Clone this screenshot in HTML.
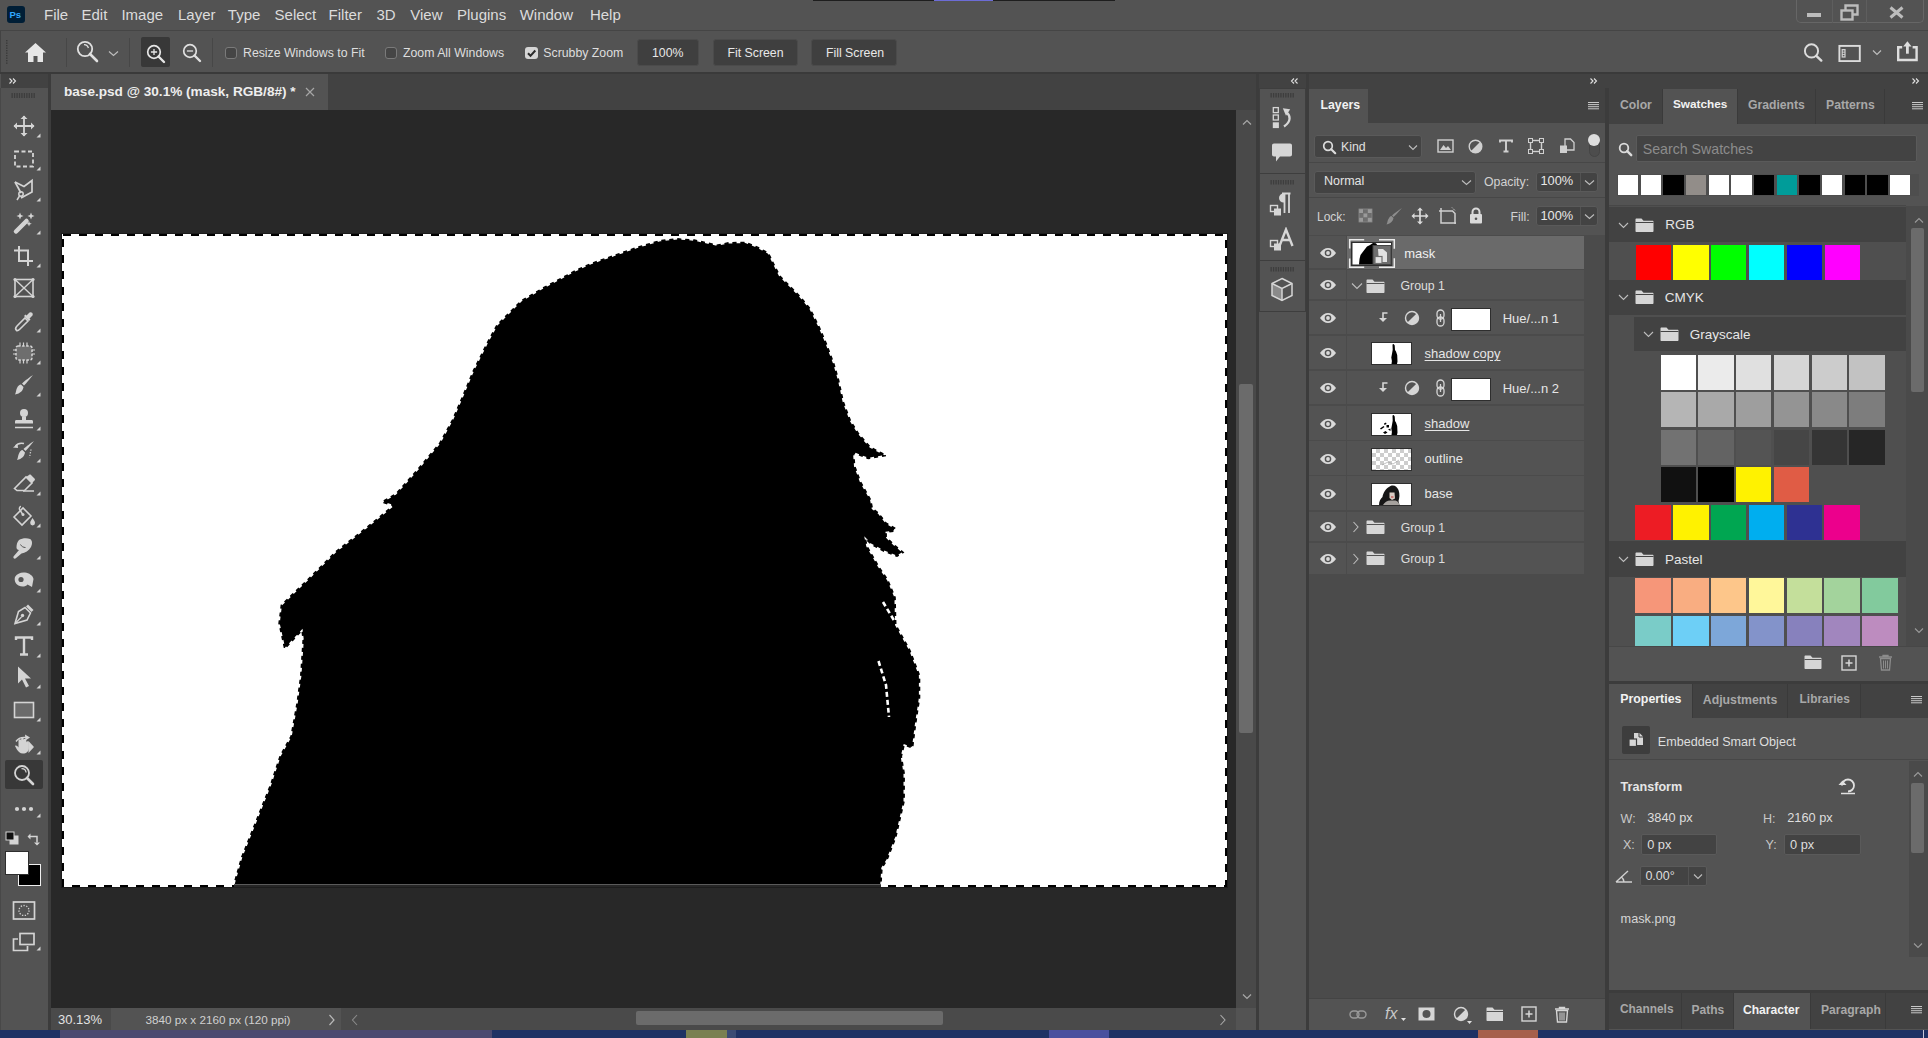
<!DOCTYPE html>
<html><head><meta charset="utf-8"><title>Photoshop</title>
<style>
html,body{margin:0;padding:0;}
body{width:1928px;height:1038px;overflow:hidden;position:relative;background:#535353;font-family:"Liberation Sans",sans-serif;}
body>div,body>svg{position:absolute;}
.t{white-space:pre;}
</style></head><body>
<div style="left:0px;top:0px;width:1928px;height:30px;background:#535353;"></div>
<div style="left:813px;top:0px;width:302px;height:1px;background:#1e1e1e;"></div>
<div style="left:934px;top:0px;width:59px;height:1px;background:#6c6cd6;"></div>
<div style="left:7px;top:6px;width:18px;height:17px;background:#001e36;border-radius:3px;"></div>
<div class="t" style="left:9.5px;top:10.43px;font-size:9.5px;line-height:9.5px;color:#31a8ff;font-weight:700;">Ps</div>
<div class="t" style="left:44px;top:7.25px;font-size:15px;line-height:15px;color:#dcdcdc;font-weight:400;">File</div>
<div class="t" style="left:81.5px;top:7.25px;font-size:15px;line-height:15px;color:#dcdcdc;font-weight:400;">Edit</div>
<div class="t" style="left:121.4px;top:7.25px;font-size:15px;line-height:15px;color:#dcdcdc;font-weight:400;">Image</div>
<div class="t" style="left:178px;top:7.25px;font-size:15px;line-height:15px;color:#dcdcdc;font-weight:400;">Layer</div>
<div class="t" style="left:227.8px;top:7.25px;font-size:15px;line-height:15px;color:#dcdcdc;font-weight:400;">Type</div>
<div class="t" style="left:274.6px;top:7.25px;font-size:15px;line-height:15px;color:#dcdcdc;font-weight:400;">Select</div>
<div class="t" style="left:328.6px;top:7.25px;font-size:15px;line-height:15px;color:#dcdcdc;font-weight:400;">Filter</div>
<div class="t" style="left:376.4px;top:7.25px;font-size:15px;line-height:15px;color:#dcdcdc;font-weight:400;">3D</div>
<div class="t" style="left:410.3px;top:7.25px;font-size:15px;line-height:15px;color:#dcdcdc;font-weight:400;">View</div>
<div class="t" style="left:457px;top:7.25px;font-size:15px;line-height:15px;color:#dcdcdc;font-weight:400;">Plugins</div>
<div class="t" style="left:519.7px;top:7.25px;font-size:15px;line-height:15px;color:#dcdcdc;font-weight:400;">Window</div>
<div class="t" style="left:589.9px;top:7.25px;font-size:15px;line-height:15px;color:#dcdcdc;font-weight:400;">Help</div>
<div style="left:1796px;top:-2px;width:128px;height:25px;border:1px solid #666;border-top:none;border-radius:0 0 5px 5px;box-sizing:border-box;"></div>
<div style="left:1832px;top:0px;width:1px;height:23px;background:#5e5e5e;"></div>
<div style="left:1866px;top:0px;width:1px;height:23px;background:#5e5e5e;"></div>
<div style="left:1807px;top:13px;width:14px;height:4px;background:#bcbcbc;"></div>
<svg style="position:absolute;left:1840px;top:4px;" width="20" height="17" viewBox="0 0 20 17"><rect x="1.5" y="6.5" width="11" height="9" fill="none" stroke="#bcbcbc" stroke-width="2.4"/><path d="M5.5 6.5V1.5h12v9h-5" fill="none" stroke="#bcbcbc" stroke-width="2.4"/></svg>
<svg style="position:absolute;left:1889px;top:6px;" width="15" height="13" viewBox="0 0 15 13"><path d="M1.5 1.5L13.5 11.5M13.5 1.5L1.5 11.5" stroke="#bcbcbc" stroke-width="3"/></svg>
<div style="left:0px;top:30px;width:1928px;height:1px;background:#454545;"></div>
<div style="left:0px;top:31px;width:1928px;height:41px;background:#535353;"></div>
<div style="left:0px;top:31px;width:1px;height:41px;background:#434343;"></div>
<div style="left:0px;top:72px;width:1928px;height:2px;background:#3a3a3a;"></div>
<svg style="position:absolute;left:5px;top:39px;" width="4" height="26" viewBox="0 0 4 26"><rect x="1" y="1.0" width="1.5" height="1.3" fill="#3a3a3a"/><rect x="1" y="3.5" width="1.5" height="1.3" fill="#3a3a3a"/><rect x="1" y="6.0" width="1.5" height="1.3" fill="#3a3a3a"/><rect x="1" y="8.5" width="1.5" height="1.3" fill="#3a3a3a"/><rect x="1" y="11.0" width="1.5" height="1.3" fill="#3a3a3a"/><rect x="1" y="13.5" width="1.5" height="1.3" fill="#3a3a3a"/><rect x="1" y="16.0" width="1.5" height="1.3" fill="#3a3a3a"/><rect x="1" y="18.5" width="1.5" height="1.3" fill="#3a3a3a"/><rect x="1" y="21.0" width="1.5" height="1.3" fill="#3a3a3a"/><rect x="1" y="23.5" width="1.5" height="1.3" fill="#3a3a3a"/></svg>
<svg style="position:absolute;left:24px;top:42px;" width="23" height="21" viewBox="0 0 23 21"><path d="M11.5 1L1 10.5h3V20h5.5v-6h4v6H19V10.5h3z" fill="#e6e6e6"/></svg>
<div style="left:66px;top:38px;width:1px;height:29px;background:#474747;"></div>
<svg style="position:absolute;left:76px;top:40px;" width="23" height="23" viewBox="0 0 23 23"><circle cx="9" cy="9" r="7.2" fill="none" stroke="#e0e0e0" stroke-width="1.8"/><path d="M14 14l7 7" stroke="#e0e0e0" stroke-width="2.6" stroke-linecap="round"/><path d="M8 4.6a4.5 4.5 0 0 1 4.4 3.4" fill="none" stroke="#e0e0e0" stroke-width="1.3"/></svg>
<svg style="position:absolute;left:108px;top:50px;" width="11" height="7" viewBox="0 0 11 7"><path d="M1 1.5l4.5 4 4.5-4" fill="none" stroke="#bdbdbd" stroke-width="1.2"/></svg>
<div style="left:129px;top:38px;width:1px;height:29px;background:#474747;"></div>
<div style="left:141px;top:37px;width:29px;height:30px;background:#383838;border-radius:2px;"></div>
<svg style="position:absolute;left:146px;top:44px;" width="21" height="20" viewBox="0 0 21 20"><circle cx="8" cy="8" r="6.3" fill="none" stroke="#e6e6e6" stroke-width="1.7"/><path d="M12.5 12.5l5.5 5.5" stroke="#e6e6e6" stroke-width="2.4" stroke-linecap="round"/><path d="M8 4.9v6.2M4.9 8h6.2" stroke="#e6e6e6" stroke-width="1.3"/></svg>
<svg style="position:absolute;left:182px;top:43px;" width="21" height="20" viewBox="0 0 21 20"><circle cx="8" cy="8" r="6.3" fill="none" stroke="#e0e0e0" stroke-width="1.7"/><path d="M12.5 12.5l5.5 5.5" stroke="#e0e0e0" stroke-width="2.4" stroke-linecap="round"/><path d="M4.9 8h6.2" stroke="#e0e0e0" stroke-width="1.3"/></svg>
<div style="left:212px;top:38px;width:1px;height:29px;background:#474747;"></div>
<div style="left:225px;top:47px;width:12px;height:12px;box-sizing:border-box;border:1px solid #7a7a7a;background:#454545;border-radius:3px;"></div>
<div class="t" style="left:243px;top:47.05px;font-size:12.3px;line-height:12.3px;color:#dedede;font-weight:400;">Resize Windows to Fit</div>
<div style="left:385px;top:47px;width:12px;height:12px;box-sizing:border-box;border:1px solid #7a7a7a;background:#454545;border-radius:3px;"></div>
<div class="t" style="left:403px;top:47.05px;font-size:12.3px;line-height:12.3px;color:#dedede;font-weight:400;">Zoom All Windows</div>
<div style="left:525px;top:47px;width:13px;height:12px;background:#d5d5d5;border-radius:3px;"></div>
<svg style="position:absolute;left:525px;top:47px;" width="13" height="12" viewBox="0 0 13 12"><path d="M3 6.2l2.5 2.6 4.8-5.3" fill="none" stroke="#2b2b2b" stroke-width="2"/></svg>
<div class="t" style="left:543.3px;top:47.05px;font-size:12.3px;line-height:12.3px;color:#dedede;font-weight:400;">Scrubby Zoom</div>
<div style="left:637px;top:39px;width:62px;height:27px;box-sizing:border-box;background:#3f3f3f;border:1px solid #4b4b4b;border-radius:3px;"></div>
<div class="t" style="left:652px;top:46.55px;font-size:12.3px;line-height:12.3px;color:#e8e8e8;font-weight:400;">100%</div>
<div style="left:713px;top:39px;width:85px;height:27px;box-sizing:border-box;background:#3f3f3f;border:1px solid #4b4b4b;border-radius:3px;"></div>
<div class="t" style="left:727.5px;top:46.55px;font-size:12.3px;line-height:12.3px;color:#e8e8e8;font-weight:400;">Fit Screen</div>
<div style="left:811px;top:39px;width:86px;height:27px;box-sizing:border-box;background:#3f3f3f;border:1px solid #4b4b4b;border-radius:3px;"></div>
<div class="t" style="left:826px;top:46.55px;font-size:12.3px;line-height:12.3px;color:#e8e8e8;font-weight:400;">Fill Screen</div>
<svg style="position:absolute;left:1802px;top:42px;" width="22" height="21" viewBox="0 0 22 21"><circle cx="9.5" cy="8.9" r="6.6" fill="none" stroke="#dcdcdc" stroke-width="1.9"/><path d="M14.3 13.8l5 4.8" stroke="#dcdcdc" stroke-width="2.4" stroke-linecap="round"/></svg>
<svg style="position:absolute;left:1837px;top:44px;" width="25" height="18" viewBox="0 0 25 18"><rect x="2.4" y="1.9" width="20.4" height="15.2" fill="none" stroke="#dcdcdc" stroke-width="1.9"/><rect x="4.6" y="5" width="4" height="8.6" fill="#d0d0d0"/><rect x="5.8" y="6.3" width="1.6" height="1.4" fill="#5a5a5a"/><rect x="5.8" y="8.6" width="1.6" height="1.4" fill="#5a5a5a"/><rect x="5.8" y="10.9" width="1.6" height="1.4" fill="#5a5a5a"/></svg>
<svg style="position:absolute;left:1872px;top:49px;" width="10" height="7" viewBox="0 0 10 7"><path d="M1 1.5l4 4 4-4" fill="none" stroke="#bdbdbd" stroke-width="1.2"/></svg>
<svg style="position:absolute;left:1895px;top:40px;" width="25" height="23" viewBox="0 0 25 23"><path d="M7.2 7.3H3.2V20H21.6V7.3H17.6" fill="none" stroke="#dedede" stroke-width="2.4"/><path d="M12.4 1.2L8.2 6.4h8.4z" fill="#dedede"/><rect x="11" y="5.5" width="2.8" height="8.2" fill="#dedede"/></svg>
<div style="left:0px;top:74px;width:48px;height:956px;background:#535353;"></div>
<div style="left:1px;top:74px;width:47px;height:14px;background:#424242;"></div>
<svg style="position:absolute;left:8px;top:77px;" width="10" height="8" viewBox="0 0 10 8"><path d="M1.5 1.5l2.5 2.5-2.5 2.5M5 1.5l2.5 2.5-2.5 2.5" fill="none" stroke="#e0e0e0" stroke-width="1.1"/></svg>
<div style="left:48px;top:74px;width:3px;height:956px;background:#3c3c3c;"></div>
<div style="left:0px;top:88px;width:1px;height:942px;background:#484848;"></div>
<svg style="position:absolute;left:11px;top:93px;" width="26" height="5" viewBox="0 0 26 5"><rect x="0.5" y="0" width="1.3" height="5" fill="#3d3d3d"/><rect x="2.95" y="0" width="1.3" height="5" fill="#3d3d3d"/><rect x="5.4" y="0" width="1.3" height="5" fill="#3d3d3d"/><rect x="7.8500000000000005" y="0" width="1.3" height="5" fill="#3d3d3d"/><rect x="10.3" y="0" width="1.3" height="5" fill="#3d3d3d"/><rect x="12.75" y="0" width="1.3" height="5" fill="#3d3d3d"/><rect x="15.200000000000001" y="0" width="1.3" height="5" fill="#3d3d3d"/><rect x="17.650000000000002" y="0" width="1.3" height="5" fill="#3d3d3d"/><rect x="20.1" y="0" width="1.3" height="5" fill="#3d3d3d"/><rect x="22.55" y="0" width="1.3" height="5" fill="#3d3d3d"/></svg>
<svg style="position:absolute;left:12px;top:114.4px;" width="24" height="24" viewBox="0 0 24 24"><path d="M12 2v20M2 12h20" stroke="#d4d4d4" stroke-width="1.8"/><path d="M12 1.5l-3.5 3.5h7zM12 22.5l-3.5-3.5h7zM1.5 12l3.5-3.5v7zM22.5 12l-3.5-3.5v7z" fill="#d4d4d4"/></svg>
<svg style="position:absolute;left:36px;top:133.4px;" width="5" height="5" viewBox="0 0 5 5"><path d="M4.5 0.5V4.5H0.5z" fill="#d4d4d4"/></svg>
<svg style="position:absolute;left:12px;top:146.5px;" width="24" height="24" viewBox="0 0 24 24"><rect x="3" y="4.5" width="18" height="15" fill="none" stroke="#d4d4d4" stroke-width="1.8" stroke-dasharray="4 2.5"/></svg>
<svg style="position:absolute;left:36px;top:165.5px;" width="5" height="5" viewBox="0 0 5 5"><path d="M4.5 0.5V4.5H0.5z" fill="#d4d4d4"/></svg>
<svg style="position:absolute;left:12px;top:178px;" width="24" height="24" viewBox="0 0 24 24"><path d="M3 4l9 4.5 8-6v11.5L9 20" fill="none" stroke="#d4d4d4" stroke-width="1.7"/><path d="M3 4l6 11" fill="none" stroke="#d4d4d4" stroke-width="1.7"/><circle cx="9" cy="16" r="2.2" fill="none" stroke="#d4d4d4" stroke-width="1.5"/><path d="M7.5 18l-2.5 4" stroke="#d4d4d4" stroke-width="1.5"/></svg>
<svg style="position:absolute;left:36px;top:197px;" width="5" height="5" viewBox="0 0 5 5"><path d="M4.5 0.5V4.5H0.5z" fill="#d4d4d4"/></svg>
<svg style="position:absolute;left:12px;top:211px;" width="24" height="24" viewBox="0 0 24 24"><path d="M4 20.5L14.5 10" stroke="#d4d4d4" stroke-width="4.5" stroke-linecap="round"/><path d="M8 1.5l1 2.5 2.5 1-2.5 1-1 2.5-1-2.5-2.5-1 2.5-1zM19 1.5l1 2.5 2.5 1-2.5 1-1 2.5-1-2.5-2.5-1 2.5-1zM17 10l.8 2 2 .8-2 .8-.8 2-.8-2-2-.8 2-.8z" fill="#d4d4d4"/></svg>
<svg style="position:absolute;left:36px;top:230px;" width="5" height="5" viewBox="0 0 5 5"><path d="M4.5 0.5V4.5H0.5z" fill="#d4d4d4"/></svg>
<svg style="position:absolute;left:12px;top:243.5px;" width="24" height="24" viewBox="0 0 24 24"><path d="M7 2v15h14M2 6.5h14V22" fill="none" stroke="#d4d4d4" stroke-width="2"/></svg>
<svg style="position:absolute;left:36px;top:262.5px;" width="5" height="5" viewBox="0 0 5 5"><path d="M4.5 0.5V4.5H0.5z" fill="#d4d4d4"/></svg>
<svg style="position:absolute;left:12px;top:276px;" width="24" height="24" viewBox="0 0 24 24"><rect x="3" y="3.5" width="18" height="17" fill="none" stroke="#d4d4d4" stroke-width="1.6"/><path d="M3 3.5l18 17M21 3.5L3 20.5" stroke="#d4d4d4" stroke-width="1.4"/><circle cx="3" cy="3.5" r="1.6" fill="#d4d4d4"/><circle cx="21" cy="3.5" r="1.6" fill="#d4d4d4"/><circle cx="3" cy="20.5" r="1.6" fill="#d4d4d4"/><circle cx="21" cy="20.5" r="1.6" fill="#d4d4d4"/></svg>
<svg style="position:absolute;left:12px;top:308.5px;" width="24" height="24" viewBox="0 0 24 24"><path d="M4.5 21.5c-1.5-1.5-.5-3.5.5-4.5l8-8 3 3-8 8c-1 1-2.5 2-3.5 1.5z" fill="none" stroke="#d4d4d4" stroke-width="1.6"/><path d="M12 7l5 5 1.5-1.5-1-1 3-3a2.2 2.2 0 0 0-3-3l-3 3-1-1z" fill="#d4d4d4"/></svg>
<svg style="position:absolute;left:36px;top:327.5px;" width="5" height="5" viewBox="0 0 5 5"><path d="M4.5 0.5V4.5H0.5z" fill="#d4d4d4"/></svg>
<svg style="position:absolute;left:12px;top:341px;" width="24" height="24" viewBox="0 0 24 24"><rect x="4" y="5" width="16" height="14" rx="2" fill="#6e6e6e" stroke="#d4d4d4" stroke-width="1.5" stroke-dasharray="2.5 1.6"/><path d="M8 1.5v3.5M11.5 1.5v3.5M15 1.5v3.5M8 19v3.5M11.5 19v3.5M15 19v3.5M1 9h3M1 13h3M20 9h3M20 13h3" stroke="#d4d4d4" stroke-width="1.2"/></svg>
<svg style="position:absolute;left:36px;top:360px;" width="5" height="5" viewBox="0 0 5 5"><path d="M4.5 0.5V4.5H0.5z" fill="#d4d4d4"/></svg>
<svg style="position:absolute;left:12px;top:372.5px;" width="24" height="24" viewBox="0 0 24 24"><path d="M21 2c-2 2.5-6.5 8-9 10.5l-2-2C12.5 8 18.5 3.5 21 2z" fill="#d4d4d4"/><path d="M9 11.5l2.5 2.5c-.5 3.5-3 6.5-8.5 7.5 1-2 1-4.5 2-6.5 1-2 2.5-3.5 4-3.5z" fill="#d4d4d4"/></svg>
<svg style="position:absolute;left:36px;top:391.5px;" width="5" height="5" viewBox="0 0 5 5"><path d="M4.5 0.5V4.5H0.5z" fill="#d4d4d4"/></svg>
<svg style="position:absolute;left:12px;top:406.5px;" width="24" height="24" viewBox="0 0 24 24"><circle cx="12" cy="6" r="4" fill="#d4d4d4"/><path d="M10 9.5h4v3.5h5.5c1 0 1.5.6 1.5 1.5v2H3v-2c0-.9.5-1.5 1.5-1.5H10z" fill="#d4d4d4"/><path d="M3 20.5h18" stroke="#d4d4d4" stroke-width="1.5"/></svg>
<svg style="position:absolute;left:36px;top:425.5px;" width="5" height="5" viewBox="0 0 5 5"><path d="M4.5 0.5V4.5H0.5z" fill="#d4d4d4"/></svg>
<svg style="position:absolute;left:12px;top:439px;" width="24" height="24" viewBox="0 0 24 24"><path d="M22 2c-2 2.5-6 7.5-8.5 10l-2-2C14 7.5 19.5 3.5 22 2z" fill="#d4d4d4"/><path d="M10.5 11l2.5 2.5c-.5 3.5-3 6.5-8 7.5 1-2 1-4.5 2-6.5 1-2 2-3.5 3.5-3.5z" fill="#d4d4d4"/><path d="M12 4.5C8 3.5 5 5 3.5 7" fill="none" stroke="#d4d4d4" stroke-width="1.5"/><path d="M1 8.5l4.5-3.5 .5 4z" fill="#d4d4d4"/><path d="M19 10.5l-1.5 8" stroke="#d4d4d4" stroke-width="1.3" stroke-dasharray="1.2 1.5"/></svg>
<svg style="position:absolute;left:36px;top:458px;" width="5" height="5" viewBox="0 0 5 5"><path d="M4.5 0.5V4.5H0.5z" fill="#d4d4d4"/></svg>
<svg style="position:absolute;left:12px;top:471.5px;" width="24" height="24" viewBox="0 0 24 24"><path d="M2.5 16.5L14 5l6 6-7.5 7.5H5z" fill="none" stroke="#d4d4d4" stroke-width="1.6"/><path d="M14 5l6 6 2.5-2.5c.6-.6.6-1.4 0-2L19 3c-.6-.6-1.4-.6-2 0z" fill="#d4d4d4"/><path d="M11 19h11" stroke="#d4d4d4" stroke-width="1.5"/></svg>
<svg style="position:absolute;left:36px;top:490.5px;" width="5" height="5" viewBox="0 0 5 5"><path d="M4.5 0.5V4.5H0.5z" fill="#d4d4d4"/></svg>
<svg style="position:absolute;left:12px;top:503.5px;" width="24" height="24" viewBox="0 0 24 24"><path d="M2 13l9-9 8 8-9 9z" fill="none" stroke="#d4d4d4" stroke-width="1.6"/><path d="M9 2.5c-1 0-2 1-1.5 3l3 4.5" fill="none" stroke="#d4d4d4" stroke-width="1.4"/><circle cx="11" cy="10.5" r="1.5" fill="#d4d4d4"/><path d="M20.5 14c1.5 2 2.5 3.5 2.5 5a2.4 2.4 0 0 1-4.8 0c0-1.5 1-3 2.3-5z" fill="#d4d4d4"/></svg>
<svg style="position:absolute;left:36px;top:522.5px;" width="5" height="5" viewBox="0 0 5 5"><path d="M4.5 0.5V4.5H0.5z" fill="#d4d4d4"/></svg>
<svg style="position:absolute;left:12px;top:536px;" width="24" height="24" viewBox="0 0 24 24"><path d="M7 4c3-2 8-2.5 11-1 2.5 1.3 2.5 5 1 8-2 3.5-6 6-9.5 6.5l-6 5c-1.5.5-2.5-.5-2-2l5.5-6.5c-1.5 0-2.5-1-2.5-2.5 0-2.5.5-5.5 2.5-7.5z" fill="#d4d4d4"/><path d="M8.5 8.5c1 2 3 3 5 3" fill="none" stroke="#535353" stroke-width="1"/></svg>
<svg style="position:absolute;left:36px;top:555px;" width="5" height="5" viewBox="0 0 5 5"><path d="M4.5 0.5V4.5H0.5z" fill="#d4d4d4"/></svg>
<svg style="position:absolute;left:12px;top:568.5px;" width="24" height="24" viewBox="0 0 24 24"><path d="M3 8c2-3.5 6-5 10-4.5 4 .5 8 3 8.5 6.5l-1.5 8-4.5-2.5c-2 2.5-6 2.5-9 1C3.5 15 2 11.5 3 8z" fill="#d4d4d4"/><circle cx="9" cy="10.5" r="2.6" fill="#535353"/></svg>
<svg style="position:absolute;left:36px;top:587.5px;" width="5" height="5" viewBox="0 0 5 5"><path d="M4.5 0.5V4.5H0.5z" fill="#d4d4d4"/></svg>
<svg style="position:absolute;left:12px;top:601.5px;" width="24" height="24" viewBox="0 0 24 24"><path d="M16 2.5l5.5 5.5-2 2-5.5-5.5z" fill="#d4d4d4"/><path d="M13 5.5l5.5 5.5-3.5 7L3 21.5 6.5 9.5z" fill="none" stroke="#d4d4d4" stroke-width="1.6"/><circle cx="10.5" cy="13.5" r="1.7" fill="#d4d4d4"/><path d="M3.5 21l6-6" stroke="#d4d4d4" stroke-width="1.2"/></svg>
<svg style="position:absolute;left:36px;top:620.5px;" width="5" height="5" viewBox="0 0 5 5"><path d="M4.5 0.5V4.5H0.5z" fill="#d4d4d4"/></svg>
<svg style="position:absolute;left:12px;top:634px;" width="24" height="24" viewBox="0 0 24 24"><path d="M4 6V3.5h16V6M12 3.5V20M8 20.5h8" fill="none" stroke="#d4d4d4" stroke-width="2.4"/></svg>
<svg style="position:absolute;left:36px;top:653px;" width="5" height="5" viewBox="0 0 5 5"><path d="M4.5 0.5V4.5H0.5z" fill="#d4d4d4"/></svg>
<svg style="position:absolute;left:12px;top:664.5px;" width="24" height="24" viewBox="0 0 24 24"><path d="M6 1.5v17l4-4 4 8 3-1.5-4-7.5h6z" fill="#d4d4d4"/></svg>
<svg style="position:absolute;left:36px;top:683.5px;" width="5" height="5" viewBox="0 0 5 5"><path d="M4.5 0.5V4.5H0.5z" fill="#d4d4d4"/></svg>
<svg style="position:absolute;left:12px;top:698px;" width="24" height="24" viewBox="0 0 24 24"><rect x="2.5" y="4.5" width="19" height="15" fill="#6b6b6b" stroke="#d4d4d4" stroke-width="1.6"/></svg>
<svg style="position:absolute;left:36px;top:717px;" width="5" height="5" viewBox="0 0 5 5"><path d="M4.5 0.5V4.5H0.5z" fill="#d4d4d4"/></svg>
<svg style="position:absolute;left:12px;top:731px;" width="24" height="24" viewBox="0 0 24 24"><path d="M4 10.5c2-3 6-4.5 10-4" fill="none" stroke="#d4d4d4" stroke-width="1.4"/><path d="M13 3.5l5 3-4.5 3z" fill="#d4d4d4"/><path d="M16.5 10l5.5 6-5.5 6z" fill="#d4d4d4"/><path d="M3 15c1-1 2.5 0 3.5 1.5V9.5a1.3 1.3 0 0 1 2.6 0V14V8a1.3 1.3 0 0 1 2.6 0v6V9a1.3 1.3 0 0 1 2.6 0v5.5-3a1.3 1.3 0 0 1 2.6 0V17c0 3.5-2.5 5.5-6 5.5-3 0-4.5-2-6-4z" fill="#d4d4d4"/></svg>
<svg style="position:absolute;left:36px;top:750px;" width="5" height="5" viewBox="0 0 5 5"><path d="M4.5 0.5V4.5H0.5z" fill="#d4d4d4"/></svg>
<div style="left:5px;top:760px;width:38px;height:29px;background:#383838;border-radius:2px;"></div>
<svg style="position:absolute;left:12px;top:763px;" width="24" height="24" viewBox="0 0 24 24"><circle cx="10" cy="10" r="7" fill="none" stroke="#d4d4d4" stroke-width="1.8"/><path d="M15 15l6 6" stroke="#d4d4d4" stroke-width="2.6" stroke-linecap="round"/><path d="M9.5 5.7a4.5 4.5 0 0 1 4.6 3.8" fill="none" stroke="#d4d4d4" stroke-width="1.3"/></svg>
<svg style="position:absolute;left:12px;top:797px;" width="24" height="24" viewBox="0 0 24 24"><circle cx="5" cy="12" r="2.1" fill="#d4d4d4"/><circle cx="12" cy="12" r="2.1" fill="#d4d4d4"/><circle cx="19" cy="12" r="2.1" fill="#d4d4d4"/></svg>
<svg style="position:absolute;left:36px;top:813px;" width="5" height="5" viewBox="0 0 5 5"><path d="M4.5 0.5V4.5H0.5z" fill="#d4d4d4"/></svg>
<svg style="position:absolute;left:5px;top:831px;" width="15" height="15" viewBox="0 0 15 15"><rect x="4.5" y="4.5" width="9" height="9" fill="#d4d4d4"/><rect x="1" y="1" width="8" height="8" fill="#111" stroke="#d4d4d4" stroke-width="1"/></svg>
<svg style="position:absolute;left:27px;top:831px;" width="15" height="15" viewBox="0 0 15 15"><path d="M2.5 5.5h7.5v6" fill="none" stroke="#d4d4d4" stroke-width="1.5"/><path d="M0.5 5.5l3-3v6zM10 14.5l-3-3h6z" fill="#d4d4d4"/></svg>
<div style="left:18px;top:864px;width:23px;height:22px;background:#f0f0f0;"></div>
<div style="left:19px;top:865px;width:21px;height:20px;background:#000000;"></div>
<div style="left:5px;top:851px;width:24px;height:24px;background:#2e2e2e;"></div>
<div style="left:6px;top:852px;width:22px;height:22px;background:#ffffff;"></div>
<svg style="position:absolute;left:12px;top:900px;" width="24" height="21" viewBox="0 0 24 21"><rect x="1.5" y="2" width="21" height="17" fill="none" stroke="#d4d4d4" stroke-width="1.7"/><circle cx="12" cy="10.5" r="5" fill="none" stroke="#d4d4d4" stroke-width="1.3" stroke-dasharray="1.3 1.5"/></svg>
<svg style="position:absolute;left:12px;top:932px;" width="24" height="21" viewBox="0 0 24 21"><rect x="8" y="1.5" width="14" height="11" fill="#535353" stroke="#d4d4d4" stroke-width="1.7"/><path d="M6 7H1.5v11.5h14V14" fill="none" stroke="#d4d4d4" stroke-width="1.7"/></svg>
<svg style="position:absolute;left:36px;top:946px;" width="5" height="5" viewBox="0 0 5 5"><path d="M4.5 0.5V4.5H0.5z" fill="#d4d4d4"/></svg>
<div style="left:51px;top:74px;width:1205px;height:36px;background:#424242;"></div>
<div style="left:51px;top:74px;width:277px;height:36px;background:#535353;"></div>
<div class="t" style="left:64px;top:85.44px;font-size:13.6px;line-height:13.6px;color:#eeeeee;font-weight:700;">base.psd @ 30.1% (mask, RGB/8#) *</div>
<svg style="position:absolute;left:305px;top:87px;" width="10" height="10" viewBox="0 0 10 10"><path d="M1 1l8 8M9 1L1 9" stroke="#a6a6a6" stroke-width="1.2"/></svg>
<div style="left:51px;top:110px;width:1185px;height:898px;background:#282828;"></div>
<div style="left:61px;top:233px;width:1167px;height:655px;background:#1c1c1c;"></div>
<svg style="position:absolute;left:62px;top:234px;" width="1165" height="653" viewBox="0 0 1165 653"><rect width="1165" height="653" fill="#fff"/><polygon points="172.0,650.0 179.7,623.0 189.3,599.0 199.0,574.7 208.6,550.6 218.2,521.7 229.0,502.4 235.1,468.7 238.7,442.0 241.1,406.0 240.0,396.4 222.7,414.9 217.0,389.5 219.3,371.0 245.9,345.5 273.6,317.8 306.0,292.4 331.4,271.5 319.8,268.1 333.7,260.0 354.5,236.9 377.7,209.1 390.4,186.0 399.5,165.0 411.4,136.6 425.7,108.0 435.0,91.0 459.0,67.0 480.6,54.2 514.0,36.3 529.4,29.4 552.2,21.4 575.0,13.4 598.0,6.6 615.0,4.8 632.2,6.0 655.0,11.1 666.4,8.8 683.5,8.3 696.0,13.4 706.4,19.1 712.0,30.5 717.8,42.0 729.2,53.4 738.0,62.5 748.0,74.5 757.5,93.6 764.6,110.3 771.8,129.4 776.6,146.0 781.3,167.6 788.5,186.7 796.5,199.5 808.1,213.0 824.5,221.6 806.2,224.5 791.7,218.8 792.7,232.2 798.5,247.7 808.8,266.0 810.4,274.5 816.5,279.1 824.2,289.1 833.5,294.5 832.0,297.2 824.2,298.4 824.2,303.0 832.0,310.7 841.2,318.4 835.0,322.3 821.2,316.9 808.8,310.0 803.4,304.5 805.0,312.2 810.4,321.5 816.5,332.3 825.8,346.0 833.1,363.3 833.8,391.0 847.8,416.0 857.6,441.4 857.6,463.8 853.4,491.7 850.6,514.0 842.2,511.0 839.4,522.4 842.2,539.2 842.2,567.0 833.8,603.4 825.0,626.0 820.0,634.0 819.0,650.0" fill="#000"/><polyline points="172.0,650.0 179.7,623.0 189.3,599.0 199.0,574.7 208.6,550.6 218.2,521.7 229.0,502.4 235.1,468.7 238.7,442.0 241.1,406.0 240.0,396.4 222.7,414.9 217.0,389.5 219.3,371.0 245.9,345.5 273.6,317.8 306.0,292.4 331.4,271.5 319.8,268.1 333.7,260.0 354.5,236.9 377.7,209.1 390.4,186.0 399.5,165.0 411.4,136.6 425.7,108.0 435.0,91.0 459.0,67.0 480.6,54.2 514.0,36.3 529.4,29.4 552.2,21.4 575.0,13.4 598.0,6.6 615.0,4.8 632.2,6.0 655.0,11.1 666.4,8.8 683.5,8.3 696.0,13.4 706.4,19.1 712.0,30.5 717.8,42.0 729.2,53.4 738.0,62.5 748.0,74.5 757.5,93.6 764.6,110.3 771.8,129.4 776.6,146.0 781.3,167.6 788.5,186.7 796.5,199.5 808.1,213.0 824.5,221.6 806.2,224.5 791.7,218.8 792.7,232.2 798.5,247.7 808.8,266.0 810.4,274.5 816.5,279.1 824.2,289.1 833.5,294.5 832.0,297.2 824.2,298.4 824.2,303.0 832.0,310.7 841.2,318.4 835.0,322.3 821.2,316.9 808.8,310.0 803.4,304.5 805.0,312.2 810.4,321.5 816.5,332.3 825.8,346.0 833.1,363.3 833.8,391.0 847.8,416.0 857.6,441.4 857.6,463.8 853.4,491.7 850.6,514.0 842.2,511.0 839.4,522.4 842.2,539.2 842.2,567.0 833.8,603.4 825.0,626.0 820.0,634.0 819.0,650.0" fill="none" stroke="#fff" stroke-width="1.4" stroke-dasharray="4 4"/><polyline points="172.0,650.0 179.7,623.0 189.3,599.0 199.0,574.7 208.6,550.6 218.2,521.7 229.0,502.4 235.1,468.7 238.7,442.0 241.1,406.0 240.0,396.4 222.7,414.9 217.0,389.5 219.3,371.0 245.9,345.5 273.6,317.8 306.0,292.4 331.4,271.5 319.8,268.1 333.7,260.0 354.5,236.9 377.7,209.1 390.4,186.0 399.5,165.0 411.4,136.6 425.7,108.0 435.0,91.0 459.0,67.0 480.6,54.2 514.0,36.3 529.4,29.4 552.2,21.4 575.0,13.4 598.0,6.6 615.0,4.8 632.2,6.0 655.0,11.1 666.4,8.8 683.5,8.3 696.0,13.4 706.4,19.1 712.0,30.5 717.8,42.0 729.2,53.4 738.0,62.5 748.0,74.5 757.5,93.6 764.6,110.3 771.8,129.4 776.6,146.0 781.3,167.6 788.5,186.7 796.5,199.5 808.1,213.0 824.5,221.6 806.2,224.5 791.7,218.8 792.7,232.2 798.5,247.7 808.8,266.0 810.4,274.5 816.5,279.1 824.2,289.1 833.5,294.5 832.0,297.2 824.2,298.4 824.2,303.0 832.0,310.7 841.2,318.4 835.0,322.3 821.2,316.9 808.8,310.0 803.4,304.5 805.0,312.2 810.4,321.5 816.5,332.3 825.8,346.0 833.1,363.3 833.8,391.0 847.8,416.0 857.6,441.4 857.6,463.8 853.4,491.7 850.6,514.0 842.2,511.0 839.4,522.4 842.2,539.2 842.2,567.0 833.8,603.4 825.0,626.0 820.0,634.0 819.0,650.0" fill="none" stroke="#000" stroke-width="1.4" stroke-dasharray="4 4" stroke-dashoffset="4"/><path d="M816.5 427L824 451 827 483 M821 368L833 388" fill="none" stroke="#fff" stroke-width="2.6" stroke-dasharray="5 3"/><rect x="1" y="1" width="1163" height="651" fill="none" stroke="#000" stroke-width="2" stroke-dasharray="8 8"/><rect x="172" y="650" width="647" height="1" fill="#5a5a5a"/><rect x="172" y="651" width="647" height="2" fill="#262626"/></svg>
<div style="left:1236px;top:110px;width:20px;height:898px;background:#494949;"></div>
<div style="left:1239px;top:384px;width:14px;height:349px;background:#6b6b6b;border-radius:2px;"></div>
<svg style="position:absolute;left:1242px;top:119px;" width="10" height="7" viewBox="0 0 10 7"><path d="M1 5.5l4-4 4 4" fill="none" stroke="#a8a8a8" stroke-width="1.2"/></svg>
<svg style="position:absolute;left:1242px;top:993px;" width="10" height="7" viewBox="0 0 10 7"><path d="M1 1.5l4 4 4-4" fill="none" stroke="#a8a8a8" stroke-width="1.2"/></svg>
<div style="left:51px;top:1008px;width:1205px;height:22px;background:#4a4a4a;"></div>
<div style="left:111px;top:1008px;width:230px;height:22px;background:#535353;"></div>
<div class="t" style="left:58px;top:1012.95px;font-size:13px;line-height:13px;color:#e2e2e2;font-weight:400;">30.13%</div>
<div class="t" style="left:145.5px;top:1014.05px;font-size:11.7px;line-height:11.7px;color:#d0d0d0;font-weight:400;">3840 px x 2160 px (120 ppi)</div>
<svg style="position:absolute;left:328px;top:1014px;" width="8" height="12" viewBox="0 0 8 12"><path d="M1.5 1l4.5 5-4.5 5" fill="none" stroke="#b8b8b8" stroke-width="1.2"/></svg>
<svg style="position:absolute;left:351px;top:1014px;" width="8" height="12" viewBox="0 0 8 12"><path d="M6 1L1.5 6 6 11" fill="none" stroke="#8a8a8a" stroke-width="1.1"/></svg>
<div style="left:636px;top:1011px;width:307px;height:14px;background:#6b6b6b;border-radius:2px;"></div>
<svg style="position:absolute;left:1219px;top:1014px;" width="8" height="12" viewBox="0 0 8 12"><path d="M1.5 1l4.5 5-4.5 5" fill="none" stroke="#a8a8a8" stroke-width="1.1"/></svg>
<div style="left:1236px;top:1008px;width:20px;height:22px;background:#535353;"></div>
<div style="left:1256px;top:74px;width:3px;height:956px;background:#3c3c3c;"></div>
<div style="left:1259px;top:74px;width:47px;height:956px;background:#535353;"></div>
<div style="left:1259px;top:74px;width:47px;height:14px;background:#424242;"></div>
<svg style="position:absolute;left:1290px;top:77px;" width="10" height="8" viewBox="0 0 10 8"><path d="M4 1.5l-2.5 2.5 2.5 2.5M7.5 1.5l-2.5 2.5 2.5 2.5" fill="none" stroke="#e0e0e0" stroke-width="1.1"/></svg>
<div style="left:1259px;top:88px;width:47px;height:86px;box-sizing:border-box;border:1px solid #3e3e3e;border-top:none;"></div>
<div style="left:1259px;top:174px;width:47px;height:86.5px;box-sizing:border-box;border:1px solid #3e3e3e;border-top:none;"></div>
<div style="left:1259px;top:260.5px;width:47px;height:51.5px;box-sizing:border-box;border:1px solid #3e3e3e;border-top:none;"></div>
<div style="left:1259px;top:88px;width:47px;height:1px;background:#3e3e3e;"></div>
<svg style="position:absolute;left:1270px;top:93px;" width="24" height="5" viewBox="0 0 24 5"><rect x="0.5" y="0" width="1.3" height="4.5" fill="#3d3d3d"/><rect x="2.95" y="0" width="1.3" height="4.5" fill="#3d3d3d"/><rect x="5.4" y="0" width="1.3" height="4.5" fill="#3d3d3d"/><rect x="7.8500000000000005" y="0" width="1.3" height="4.5" fill="#3d3d3d"/><rect x="10.3" y="0" width="1.3" height="4.5" fill="#3d3d3d"/><rect x="12.75" y="0" width="1.3" height="4.5" fill="#3d3d3d"/><rect x="15.200000000000001" y="0" width="1.3" height="4.5" fill="#3d3d3d"/><rect x="17.650000000000002" y="0" width="1.3" height="4.5" fill="#3d3d3d"/><rect x="20.1" y="0" width="1.3" height="4.5" fill="#3d3d3d"/><rect x="22.55" y="0" width="1.3" height="4.5" fill="#3d3d3d"/></svg>
<svg style="position:absolute;left:1270px;top:180px;" width="24" height="5" viewBox="0 0 24 5"><rect x="0.5" y="0" width="1.3" height="4.5" fill="#3d3d3d"/><rect x="2.95" y="0" width="1.3" height="4.5" fill="#3d3d3d"/><rect x="5.4" y="0" width="1.3" height="4.5" fill="#3d3d3d"/><rect x="7.8500000000000005" y="0" width="1.3" height="4.5" fill="#3d3d3d"/><rect x="10.3" y="0" width="1.3" height="4.5" fill="#3d3d3d"/><rect x="12.75" y="0" width="1.3" height="4.5" fill="#3d3d3d"/><rect x="15.200000000000001" y="0" width="1.3" height="4.5" fill="#3d3d3d"/><rect x="17.650000000000002" y="0" width="1.3" height="4.5" fill="#3d3d3d"/><rect x="20.1" y="0" width="1.3" height="4.5" fill="#3d3d3d"/><rect x="22.55" y="0" width="1.3" height="4.5" fill="#3d3d3d"/></svg>
<svg style="position:absolute;left:1270px;top:266.5px;" width="24" height="5" viewBox="0 0 24 5"><rect x="0.5" y="0" width="1.3" height="4.5" fill="#3d3d3d"/><rect x="2.95" y="0" width="1.3" height="4.5" fill="#3d3d3d"/><rect x="5.4" y="0" width="1.3" height="4.5" fill="#3d3d3d"/><rect x="7.8500000000000005" y="0" width="1.3" height="4.5" fill="#3d3d3d"/><rect x="10.3" y="0" width="1.3" height="4.5" fill="#3d3d3d"/><rect x="12.75" y="0" width="1.3" height="4.5" fill="#3d3d3d"/><rect x="15.200000000000001" y="0" width="1.3" height="4.5" fill="#3d3d3d"/><rect x="17.650000000000002" y="0" width="1.3" height="4.5" fill="#3d3d3d"/><rect x="20.1" y="0" width="1.3" height="4.5" fill="#3d3d3d"/><rect x="22.55" y="0" width="1.3" height="4.5" fill="#3d3d3d"/></svg>
<svg style="position:absolute;left:1271px;top:106px;" width="22" height="23" viewBox="0 0 22 23"><rect x="2.3" y="1.6" width="5" height="5" fill="none" stroke="#d6d6d6" stroke-width="1.3"/><rect x="2.3" y="9" width="5" height="5" fill="none" stroke="#d6d6d6" stroke-width="1.3"/><rect x="1.8" y="16.3" width="6.1" height="5.8" fill="#d6d6d6"/><path d="M15.5 6.5C19.5 9.5 20.5 15.5 13 20.5" fill="none" stroke="#d6d6d6" stroke-width="2.3"/><path d="M11.8 2.2L19.2 3.2 15 9.8z" fill="#d6d6d6"/></svg>
<svg style="position:absolute;left:1271px;top:142px;" width="22" height="21" viewBox="0 0 22 21"><path d="M3 1.5h16c1.2 0 2 .8 2 2v9c0 1.2-.8 2-2 2H9l-4 5v-5H3c-1.2 0-2-.8-2-2v-9c0-1.2.8-2 2-2z" fill="#d6d6d6"/></svg>
<svg style="position:absolute;left:1269px;top:192px;" width="24" height="24" viewBox="0 0 24 24"><path d="M13 1.5h8.5M15.5 1.5V21M20 1.5V21" stroke="#d6d6d6" stroke-width="1.8"/><path d="M15.5 1.5h-1a4.5 4.5 0 0 0 0 9h1z" fill="#d6d6d6"/><rect x="1.5" y="13.5" width="7" height="6" fill="none" stroke="#d6d6d6" stroke-width="1.4"/><rect x="5" y="16.5" width="7" height="7" fill="#d6d6d6"/></svg>
<svg style="position:absolute;left:1269px;top:227px;" width="25" height="24" viewBox="0 0 25 24"><path d="M10.5 19L17 2.5 23.5 19M13 13h8" fill="none" stroke="#d6d6d6" stroke-width="2.4"/><rect x="1.5" y="13.5" width="7" height="6" fill="none" stroke="#d6d6d6" stroke-width="1.4"/><rect x="5" y="16.5" width="7" height="7" fill="#d6d6d6"/></svg>
<svg style="position:absolute;left:1270px;top:277px;" width="24" height="25" viewBox="0 0 24 25"><path d="M2 6.5l10 5v12l-10-5z" fill="#8a8a8a"/><path d="M12 1.5l10 5v12l-10 5-10-5v-12z" fill="none" stroke="#d6d6d6" stroke-width="1.5"/><path d="M2 6.5l10 5 10-5M12 11.5v12" fill="none" stroke="#d6d6d6" stroke-width="1.5"/></svg>
<div style="left:1306px;top:74px;width:3px;height:956px;background:#3c3c3c;"></div>
<div style="left:1309px;top:74px;width:296px;height:956px;background:#535353;"></div>
<div style="left:1309px;top:74px;width:619px;height:14px;background:#424242;"></div>
<svg style="position:absolute;left:1589px;top:77px;" width="10" height="8" viewBox="0 0 10 8"><path d="M1.5 1.5l2.5 2.5-2.5 2.5M5 1.5l2.5 2.5-2.5 2.5" fill="none" stroke="#e0e0e0" stroke-width="1.1"/></svg>
<svg style="position:absolute;left:1911px;top:77px;" width="10" height="8" viewBox="0 0 10 8"><path d="M1.5 1.5l2.5 2.5-2.5 2.5M5 1.5l2.5 2.5-2.5 2.5" fill="none" stroke="#e0e0e0" stroke-width="1.1"/></svg>
<div style="left:1309px;top:88px;width:296px;height:35px;background:#424242;"></div>
<div style="left:1309px;top:89px;width:59px;height:34px;background:#535353;"></div>
<div class="t" style="left:1320.5px;top:99.25px;font-size:12.3px;line-height:12.3px;color:#f2f2f2;font-weight:700;">Layers</div>
<svg style="position:absolute;left:1588px;top:102px;" width="11" height="8" viewBox="0 0 11 8"><rect x="0" y="0.0" width="11" height="1" fill="#c8c8c8"/><rect x="0" y="2.1" width="11" height="1" fill="#c8c8c8"/><rect x="0" y="4.2" width="11" height="1" fill="#c8c8c8"/><rect x="0" y="6.300000000000001" width="11" height="1" fill="#c8c8c8"/></svg>
<div style="left:1314px;top:135px;width:108px;height:23px;box-sizing:border-box;background:#434343;border:1px solid #5a5a5a;border-radius:3px;"></div>
<svg style="position:absolute;left:1322px;top:140px;" width="15" height="15" viewBox="0 0 15 15"><circle cx="6" cy="6" r="4.3" fill="none" stroke="#dcdcdc" stroke-width="1.7"/><path d="M9.2 9.2l4 4" stroke="#dcdcdc" stroke-width="2.2" stroke-linecap="round"/></svg>
<div class="t" style="left:1341px;top:140.54px;font-size:12.3px;line-height:12.3px;color:#e0e0e0;font-weight:400;">Kind</div>
<svg style="position:absolute;left:1408px;top:144px;" width="10" height="7" viewBox="0 0 10 7"><path d="M1 1.5l4 4 4-4" fill="none" stroke="#bdbdbd" stroke-width="1.1"/></svg>
<svg style="position:absolute;left:1437px;top:139px;" width="17" height="14" viewBox="0 0 17 14"><rect x="1" y="1" width="15" height="12" fill="none" stroke="#d0d0d0" stroke-width="1.4"/><path d="M3 11l3.5-5 2.5 3 2-2 3 4z" fill="#d0d0d0"/></svg>
<svg style="position:absolute;left:1468px;top:139px;" width="15" height="15" viewBox="0 0 15 15"><circle cx="7.5" cy="7.5" r="6.3" fill="none" stroke="#d0d0d0" stroke-width="1.4"/><path d="M12 3l-9 9a6.3 6.3 0 0 0 9-9z" fill="#d0d0d0"/></svg>
<svg style="position:absolute;left:1499px;top:139px;" width="14" height="14" viewBox="0 0 14 14"><path d="M1 3.5V1.5h12v2M7 1.5V12.5M4.5 12.5h5" fill="none" stroke="#d0d0d0" stroke-width="1.9"/></svg>
<svg style="position:absolute;left:1528px;top:138px;" width="16" height="16" viewBox="0 0 16 16"><rect x="2.5" y="2.5" width="11" height="11" fill="none" stroke="#d0d0d0" stroke-width="1.4"/><rect x="0.5" y="0.5" width="4" height="4" fill="#535353" stroke="#d0d0d0" stroke-width="1"/><rect x="11.5" y="0.5" width="4" height="4" fill="#535353" stroke="#d0d0d0" stroke-width="1"/><rect x="0.5" y="11.5" width="4" height="4" fill="#535353" stroke="#d0d0d0" stroke-width="1"/><rect x="11.5" y="11.5" width="4" height="4" fill="#535353" stroke="#d0d0d0" stroke-width="1"/></svg>
<svg style="position:absolute;left:1559px;top:138px;" width="16" height="16" viewBox="0 0 16 16"><path d="M6 1h5.5l3.5 3.5V12H6z" fill="none" stroke="#d0d0d0" stroke-width="1.3"/><rect x="1" y="7.5" width="7" height="7.5" fill="#d0d0d0"/></svg>
<div style="left:1589px;top:135px;width:11px;height:22px;box-sizing:border-box;border:1px solid #454545;border-radius:6px;background:#4d4d4d;"></div>
<div style="left:1588px;top:134px;width:12px;height:12px;border-radius:6px;background:#dedede;"></div>
<div style="left:1309px;top:162px;width:296px;height:1px;background:#474747;"></div>
<div style="left:1314px;top:171px;width:162px;height:23px;box-sizing:border-box;background:#434343;border:1px solid #5a5a5a;border-radius:3px;"></div>
<div class="t" style="left:1324px;top:175.38px;font-size:12.5px;line-height:12.5px;color:#e4e4e4;font-weight:400;">Normal</div>
<svg style="position:absolute;left:1461px;top:179px;" width="11" height="7" viewBox="0 0 11 7"><path d="M1 1.5l4.5 4 4.5-4" fill="none" stroke="#bdbdbd" stroke-width="1.1"/></svg>
<div class="t" style="left:1484px;top:176.04px;font-size:12.3px;line-height:12.3px;color:#d2d2d2;font-weight:400;">Opacity:</div>
<div style="left:1536px;top:172px;width:62px;height:20px;box-sizing:border-box;background:#434343;border:1px solid #5a5a5a;border-radius:3px;"></div>
<div style="left:1580px;top:173px;width:1px;height:18px;background:#535353;"></div>
<div class="t" style="left:1540.5px;top:175.12px;font-size:12.8px;line-height:12.8px;color:#e8e8e8;font-weight:400;">100%</div>
<svg style="position:absolute;left:1584px;top:179px;" width="11" height="7" viewBox="0 0 11 7"><path d="M1 1.5l4.5 4 4.5-4" fill="none" stroke="#bdbdbd" stroke-width="1.1"/></svg>
<div style="left:1309px;top:197px;width:296px;height:1px;background:#474747;"></div>
<div class="t" style="left:1317px;top:210.80px;font-size:12px;line-height:12px;color:#d2d2d2;font-weight:400;">Lock:</div>
<svg style="position:absolute;left:1358px;top:208px;" width="15" height="15" viewBox="0 0 15 15"><rect x="1.00" y="1.00" width="4.33" height="4.33" fill="#9a9a9a"/><rect x="1.00" y="5.33" width="4.33" height="4.33" fill="#6e6e6e"/><rect x="1.00" y="9.66" width="4.33" height="4.33" fill="#9a9a9a"/><rect x="5.33" y="1.00" width="4.33" height="4.33" fill="#6e6e6e"/><rect x="5.33" y="5.33" width="4.33" height="4.33" fill="#9a9a9a"/><rect x="5.33" y="9.66" width="4.33" height="4.33" fill="#6e6e6e"/><rect x="9.66" y="1.00" width="4.33" height="4.33" fill="#9a9a9a"/><rect x="9.66" y="5.33" width="4.33" height="4.33" fill="#6e6e6e"/><rect x="9.66" y="9.66" width="4.33" height="4.33" fill="#9a9a9a"/><rect x="1" y="1" width="13" height="13" fill="none" stroke="#8a8a8a" stroke-width="0.8"/></svg>
<svg style="position:absolute;left:1385px;top:207px;" width="18" height="18" viewBox="0 0 18 18"><path d="M17 1C15 3.5 11 7.5 8.5 10l-1.5-1.5C9.5 6 14.5 2.5 17 1z" fill="#8e8e8e"/><path d="M6.5 9l2 2c-.5 3-2.5 5.5-7 6.5 1-1.5.8-3.5 1.8-5.2.8-1.5 1.8-3.3 3.2-3.3z" fill="#8e8e8e"/></svg>
<svg style="position:absolute;left:1411px;top:207px;" width="18" height="18" viewBox="0 0 18 18"><path d="M9 2v14M2 9h14" stroke="#dadada" stroke-width="1.7"/><path d="M9 0.5l-3 3h6zM9 17.5l-3-3h6zM0.5 9l3-3v6zM17.5 9l-3-3v6z" fill="#dadada"/></svg>
<svg style="position:absolute;left:1438px;top:207px;" width="19" height="18" viewBox="0 0 19 18"><path d="M3 1v15h15M1 4h13.5l2.5 2.5V17" fill="none" stroke="#d0d0d0" stroke-width="1.5"/><path d="M14 0.5l3.5 3.5" stroke="#d0d0d0" stroke-width="1" stroke-dasharray="1.2 1"/></svg>
<svg style="position:absolute;left:1469px;top:207px;" width="14" height="17" viewBox="0 0 14 17"><path d="M3.5 7V5a3.5 3.5 0 0 1 7 0v2" fill="none" stroke="#dadada" stroke-width="2"/><rect x="1" y="7" width="12" height="9.5" rx="1" fill="#dadada"/><circle cx="7" cy="11.7" r="1.3" fill="#535353"/></svg>
<div class="t" style="left:1510.5px;top:210.54px;font-size:12.3px;line-height:12.3px;color:#d2d2d2;font-weight:400;">Fill:</div>
<div style="left:1536px;top:206px;width:62px;height:20px;box-sizing:border-box;background:#434343;border:1px solid #5a5a5a;border-radius:3px;"></div>
<div style="left:1580px;top:207px;width:1px;height:18px;background:#535353;"></div>
<div class="t" style="left:1540.5px;top:209.62px;font-size:12.8px;line-height:12.8px;color:#e8e8e8;font-weight:400;">100%</div>
<svg style="position:absolute;left:1584px;top:213px;" width="11" height="7" viewBox="0 0 11 7"><path d="M1 1.5l4.5 4 4.5-4" fill="none" stroke="#bdbdbd" stroke-width="1.1"/></svg>
<div style="left:1309px;top:235px;width:296px;height:763px;background:#4b4b4b;"></div>
<div style="left:1309px;top:236px;width:275px;height:32.0px;background:#535353;"></div>
<div style="left:1346px;top:236px;width:1px;height:32.0px;background:#4b4b4b;"></div>
<div style="left:1309px;top:269.5px;width:275px;height:29.69999999999999px;background:#535353;"></div>
<div style="left:1346px;top:269.5px;width:1px;height:29.69999999999999px;background:#4b4b4b;"></div>
<div style="left:1309px;top:300.7px;width:275px;height:33.60000000000002px;background:#535353;"></div>
<div style="left:1346px;top:300.7px;width:1px;height:33.60000000000002px;background:#4b4b4b;"></div>
<div style="left:1309px;top:335.8px;width:275px;height:33.5px;background:#535353;"></div>
<div style="left:1346px;top:335.8px;width:1px;height:33.5px;background:#4b4b4b;"></div>
<div style="left:1309px;top:370.8px;width:275px;height:33.69999999999999px;background:#535353;"></div>
<div style="left:1346px;top:370.8px;width:1px;height:33.69999999999999px;background:#4b4b4b;"></div>
<div style="left:1309px;top:406px;width:275px;height:33.5px;background:#535353;"></div>
<div style="left:1346px;top:406px;width:1px;height:33.5px;background:#4b4b4b;"></div>
<div style="left:1309px;top:441px;width:275px;height:33.80000000000001px;background:#535353;"></div>
<div style="left:1346px;top:441px;width:1px;height:33.80000000000001px;background:#4b4b4b;"></div>
<div style="left:1309px;top:476.3px;width:275px;height:33.80000000000001px;background:#535353;"></div>
<div style="left:1346px;top:476.3px;width:1px;height:33.80000000000001px;background:#4b4b4b;"></div>
<div style="left:1309px;top:511.6px;width:275px;height:29.899999999999977px;background:#535353;"></div>
<div style="left:1346px;top:511.6px;width:1px;height:29.899999999999977px;background:#4b4b4b;"></div>
<div style="left:1309px;top:543px;width:275px;height:30.5px;background:#535353;"></div>
<div style="left:1346px;top:543px;width:1px;height:30.5px;background:#4b4b4b;"></div>
<div style="left:1347px;top:236px;width:237px;height:32.5px;background:#6a6a6a;"></div>
<svg style="position:absolute;left:1318.5px;top:246.75px;" width="18" height="12" viewBox="0 0 18 12"><path d="M1 6c2.5-3.5 5-5 8-5s5.5 1.5 8 5c-2.5 3.5-5 5-8 5s-5.5-1.5-8-5z" fill="#dadada"/><circle cx="9" cy="6" r="3.3" fill="#535353"/><circle cx="9" cy="6" r="1.9" fill="#dadada"/></svg>
<svg style="position:absolute;left:1318.5px;top:279.1px;" width="18" height="12" viewBox="0 0 18 12"><path d="M1 6c2.5-3.5 5-5 8-5s5.5 1.5 8 5c-2.5 3.5-5 5-8 5s-5.5-1.5-8-5z" fill="#dadada"/><circle cx="9" cy="6" r="3.3" fill="#535353"/><circle cx="9" cy="6" r="1.9" fill="#dadada"/></svg>
<svg style="position:absolute;left:1318.5px;top:312.25px;" width="18" height="12" viewBox="0 0 18 12"><path d="M1 6c2.5-3.5 5-5 8-5s5.5 1.5 8 5c-2.5 3.5-5 5-8 5s-5.5-1.5-8-5z" fill="#dadada"/><circle cx="9" cy="6" r="3.3" fill="#535353"/><circle cx="9" cy="6" r="1.9" fill="#dadada"/></svg>
<svg style="position:absolute;left:1318.5px;top:347.3px;" width="18" height="12" viewBox="0 0 18 12"><path d="M1 6c2.5-3.5 5-5 8-5s5.5 1.5 8 5c-2.5 3.5-5 5-8 5s-5.5-1.5-8-5z" fill="#dadada"/><circle cx="9" cy="6" r="3.3" fill="#535353"/><circle cx="9" cy="6" r="1.9" fill="#dadada"/></svg>
<svg style="position:absolute;left:1318.5px;top:382.4px;" width="18" height="12" viewBox="0 0 18 12"><path d="M1 6c2.5-3.5 5-5 8-5s5.5 1.5 8 5c-2.5 3.5-5 5-8 5s-5.5-1.5-8-5z" fill="#dadada"/><circle cx="9" cy="6" r="3.3" fill="#535353"/><circle cx="9" cy="6" r="1.9" fill="#dadada"/></svg>
<svg style="position:absolute;left:1318.5px;top:417.5px;" width="18" height="12" viewBox="0 0 18 12"><path d="M1 6c2.5-3.5 5-5 8-5s5.5 1.5 8 5c-2.5 3.5-5 5-8 5s-5.5-1.5-8-5z" fill="#dadada"/><circle cx="9" cy="6" r="3.3" fill="#535353"/><circle cx="9" cy="6" r="1.9" fill="#dadada"/></svg>
<svg style="position:absolute;left:1318.5px;top:452.65px;" width="18" height="12" viewBox="0 0 18 12"><path d="M1 6c2.5-3.5 5-5 8-5s5.5 1.5 8 5c-2.5 3.5-5 5-8 5s-5.5-1.5-8-5z" fill="#dadada"/><circle cx="9" cy="6" r="3.3" fill="#535353"/><circle cx="9" cy="6" r="1.9" fill="#dadada"/></svg>
<svg style="position:absolute;left:1318.5px;top:487.95000000000005px;" width="18" height="12" viewBox="0 0 18 12"><path d="M1 6c2.5-3.5 5-5 8-5s5.5 1.5 8 5c-2.5 3.5-5 5-8 5s-5.5-1.5-8-5z" fill="#dadada"/><circle cx="9" cy="6" r="3.3" fill="#535353"/><circle cx="9" cy="6" r="1.9" fill="#dadada"/></svg>
<svg style="position:absolute;left:1318.5px;top:521.3px;" width="18" height="12" viewBox="0 0 18 12"><path d="M1 6c2.5-3.5 5-5 8-5s5.5 1.5 8 5c-2.5 3.5-5 5-8 5s-5.5-1.5-8-5z" fill="#dadada"/><circle cx="9" cy="6" r="3.3" fill="#535353"/><circle cx="9" cy="6" r="1.9" fill="#dadada"/></svg>
<svg style="position:absolute;left:1318.5px;top:553.0px;" width="18" height="12" viewBox="0 0 18 12"><path d="M1 6c2.5-3.5 5-5 8-5s5.5 1.5 8 5c-2.5 3.5-5 5-8 5s-5.5-1.5-8-5z" fill="#dadada"/><circle cx="9" cy="6" r="3.3" fill="#535353"/><circle cx="9" cy="6" r="1.9" fill="#dadada"/></svg>
<svg style="position:absolute;left:1348px;top:238px;" width="48" height="31" viewBox="0 0 48 31"><path d="M1.7 10.5V1.7h14.5M31 1.7h15.3v9M1.7 20.5v8.8h14.5M31 29.3h15.3v-9" fill="none" stroke="#ececec" stroke-width="1.5"/></svg>
<svg style="position:absolute;left:1351px;top:242px;" width="41" height="24" viewBox="0 0 41 24"><rect width="41" height="24" fill="#2e2e2e"/><rect x="1.5" y="1" width="38.5" height="21.5" fill="#fff"/><path d="M8 22.5L8.5 17 9.5 13 12.5 9 16 4.5 19 3 22 1 25 1.2 26.5 3.5H22V22.5z" fill="#000"/><rect x="22" y="3.5" width="18" height="19" fill="#6e6e6e" stroke="#454545" stroke-width="1"/><path d="M27 7h5l4 3.5V20h-8z" fill="#e2e2e2"/><rect x="24" y="14.5" width="7" height="7" fill="#e2e2e2" stroke="#6e6e6e" stroke-width="1.2"/></svg>
<div class="t" style="left:1404.2px;top:246.65px;font-size:13px;line-height:13px;color:#f0f0f0;font-weight:400;">mask</div>
<svg style="position:absolute;left:1351px;top:282px;" width="12" height="9" viewBox="0 0 12 9"><path d="M1 1.5l5 5 5-5" fill="none" stroke="#bdbdbd" stroke-width="1.1"/></svg>
<svg style="position:absolute;left:1366px;top:279px;" width="19" height="14" viewBox="0 0 19 14"><path d="M0.5 1.5c0-.6.4-1 1-1h5l2 2.2h9c.6 0 1 .4 1 1V13c0 .6-.4 1-1 1h-16c-.6 0-1-.4-1-1z" fill="#d6d6d6"/><path d="M0.5 4.5h18" stroke="#535353" stroke-width="1"/></svg>
<div class="t" style="left:1400.5px;top:280.25px;font-size:12.3px;line-height:12.3px;color:#dedede;font-weight:400;">Group 1</div>
<svg style="position:absolute;left:1378px;top:311.2px;" width="11" height="12" viewBox="0 0 11 12"><path d="M9.5 2H5V7.5" fill="none" stroke="#d6d6d6" stroke-width="1.6"/><path d="M1 7h8l-4 4z" fill="#d6d6d6"/></svg>
<svg style="position:absolute;left:1404px;top:310.2px;" width="16" height="16" viewBox="0 0 16 16"><circle cx="8" cy="8" r="6.5" fill="none" stroke="#d6d6d6" stroke-width="1.4"/><path d="M12.6 3.4l-9.2 9.2a6.5 6.5 0 0 0 9.2-9.2z" fill="#d6d6d6"/></svg>
<svg style="position:absolute;left:1435px;top:309.2px;" width="12" height="18" viewBox="0 0 12 18"><rect x="2" y="1" width="7" height="9" rx="3.5" fill="none" stroke="#d6d6d6" stroke-width="1.3"/><rect x="2" y="8" width="7" height="9" rx="3.5" fill="none" stroke="#d6d6d6" stroke-width="1.3"/><path d="M5.5 5v8" stroke="#d6d6d6" stroke-width="1.3"/></svg>
<div style="left:1451px;top:308.2px;width:40px;height:23.0px;background:#2e2e2e;"></div>
<div style="left:1452px;top:309.2px;width:38px;height:21.0px;background:#ffffff;"></div>
<div class="t" style="left:1502.7px;top:312.15px;font-size:13px;line-height:13px;color:#e6e6e6;font-weight:400;">Hue/...n 1</div>
<svg style="position:absolute;left:1378px;top:381.3px;" width="11" height="12" viewBox="0 0 11 12"><path d="M9.5 2H5V7.5" fill="none" stroke="#d6d6d6" stroke-width="1.6"/><path d="M1 7h8l-4 4z" fill="#d6d6d6"/></svg>
<svg style="position:absolute;left:1404px;top:380.3px;" width="16" height="16" viewBox="0 0 16 16"><circle cx="8" cy="8" r="6.5" fill="none" stroke="#d6d6d6" stroke-width="1.4"/><path d="M12.6 3.4l-9.2 9.2a6.5 6.5 0 0 0 9.2-9.2z" fill="#d6d6d6"/></svg>
<svg style="position:absolute;left:1435px;top:379.3px;" width="12" height="18" viewBox="0 0 12 18"><rect x="2" y="1" width="7" height="9" rx="3.5" fill="none" stroke="#d6d6d6" stroke-width="1.3"/><rect x="2" y="8" width="7" height="9" rx="3.5" fill="none" stroke="#d6d6d6" stroke-width="1.3"/><path d="M5.5 5v8" stroke="#d6d6d6" stroke-width="1.3"/></svg>
<div style="left:1451px;top:378.3px;width:40px;height:23.0px;background:#2e2e2e;"></div>
<div style="left:1452px;top:379.3px;width:38px;height:21.0px;background:#ffffff;"></div>
<div class="t" style="left:1502.7px;top:382.25px;font-size:13px;line-height:13px;color:#e6e6e6;font-weight:400;">Hue/...n 2</div>
<div style="left:1371px;top:342.3px;width:41px;height:23.0px;background:#2e2e2e;"></div>
<svg style="position:absolute;left:1372px;top:343.3px;" width="39" height="21" viewBox="0 0 39 21"><rect width="39" height="21" fill="#fff"/><path d="M20.5 1.5l1.2-.5 1 1.5.3 4.5 1 1.5 1.2 3.5.3 6.5-.5 2.5h-5.5l.4-3-.6-3.5.8-4.2.6-3.5z" fill="#000"/></svg>
<div class="t" style="left:1424.6px;top:346.95px;font-size:13px;line-height:13px;color:#e6e6e6;font-weight:400;text-decoration:underline;text-underline-offset:2px;">shadow copy</div>
<div style="left:1371px;top:412.5px;width:41px;height:23.0px;background:#2e2e2e;"></div>
<svg style="position:absolute;left:1372px;top:413.5px;" width="39" height="21" viewBox="0 0 39 21"><rect width="39" height="21" fill="#fff"/><path d="M20.5 1.5l1.2-.5 1 1.5.3 4.5 1 1.5 1.2 3.5.3 6.5-.5 2.5h-5.5l.4-3-.6-3.5.8-4.2.6-3.5z" fill="#000"/><path d="M8 14.5l3.5-2.5 1 1-3.5 2.5zM11 18.5l2.5-1.5 2 1.5-2.5 1.5zM14.5 11h2.5v2.5h-2.5zM16 15.5l2.5-1v2.5zM12 9.5l2-1 .5 1.5-2 1z" fill="#000"/></svg>
<div class="t" style="left:1424.6px;top:417.15px;font-size:13px;line-height:13px;color:#e6e6e6;font-weight:400;text-decoration:underline;text-underline-offset:2px;">shadow</div>
<div style="left:1371px;top:447.5px;width:41px;height:23.0px;background:#2e2e2e;"></div>
<svg style="position:absolute;left:1372px;top:448.5px;" width="39" height="21" viewBox="0 0 39 21"><rect x="0" y="0" width="4" height="4" fill="#fff"/><rect x="0" y="4" width="4" height="4" fill="#cdcdcd"/><rect x="0" y="8" width="4" height="4" fill="#fff"/><rect x="0" y="12" width="4" height="4" fill="#cdcdcd"/><rect x="0" y="16" width="4" height="4" fill="#fff"/><rect x="0" y="20" width="4" height="4" fill="#cdcdcd"/><rect x="4" y="0" width="4" height="4" fill="#cdcdcd"/><rect x="4" y="4" width="4" height="4" fill="#fff"/><rect x="4" y="8" width="4" height="4" fill="#cdcdcd"/><rect x="4" y="12" width="4" height="4" fill="#fff"/><rect x="4" y="16" width="4" height="4" fill="#cdcdcd"/><rect x="4" y="20" width="4" height="4" fill="#fff"/><rect x="8" y="0" width="4" height="4" fill="#fff"/><rect x="8" y="4" width="4" height="4" fill="#cdcdcd"/><rect x="8" y="8" width="4" height="4" fill="#fff"/><rect x="8" y="12" width="4" height="4" fill="#cdcdcd"/><rect x="8" y="16" width="4" height="4" fill="#fff"/><rect x="8" y="20" width="4" height="4" fill="#cdcdcd"/><rect x="12" y="0" width="4" height="4" fill="#cdcdcd"/><rect x="12" y="4" width="4" height="4" fill="#fff"/><rect x="12" y="8" width="4" height="4" fill="#cdcdcd"/><rect x="12" y="12" width="4" height="4" fill="#fff"/><rect x="12" y="16" width="4" height="4" fill="#cdcdcd"/><rect x="12" y="20" width="4" height="4" fill="#fff"/><rect x="16" y="0" width="4" height="4" fill="#fff"/><rect x="16" y="4" width="4" height="4" fill="#cdcdcd"/><rect x="16" y="8" width="4" height="4" fill="#fff"/><rect x="16" y="12" width="4" height="4" fill="#cdcdcd"/><rect x="16" y="16" width="4" height="4" fill="#fff"/><rect x="16" y="20" width="4" height="4" fill="#cdcdcd"/><rect x="20" y="0" width="4" height="4" fill="#cdcdcd"/><rect x="20" y="4" width="4" height="4" fill="#fff"/><rect x="20" y="8" width="4" height="4" fill="#cdcdcd"/><rect x="20" y="12" width="4" height="4" fill="#fff"/><rect x="20" y="16" width="4" height="4" fill="#cdcdcd"/><rect x="20" y="20" width="4" height="4" fill="#fff"/><rect x="24" y="0" width="4" height="4" fill="#fff"/><rect x="24" y="4" width="4" height="4" fill="#cdcdcd"/><rect x="24" y="8" width="4" height="4" fill="#fff"/><rect x="24" y="12" width="4" height="4" fill="#cdcdcd"/><rect x="24" y="16" width="4" height="4" fill="#fff"/><rect x="24" y="20" width="4" height="4" fill="#cdcdcd"/><rect x="28" y="0" width="4" height="4" fill="#cdcdcd"/><rect x="28" y="4" width="4" height="4" fill="#fff"/><rect x="28" y="8" width="4" height="4" fill="#cdcdcd"/><rect x="28" y="12" width="4" height="4" fill="#fff"/><rect x="28" y="16" width="4" height="4" fill="#cdcdcd"/><rect x="28" y="20" width="4" height="4" fill="#fff"/><rect x="32" y="0" width="4" height="4" fill="#fff"/><rect x="32" y="4" width="4" height="4" fill="#cdcdcd"/><rect x="32" y="8" width="4" height="4" fill="#fff"/><rect x="32" y="12" width="4" height="4" fill="#cdcdcd"/><rect x="32" y="16" width="4" height="4" fill="#fff"/><rect x="32" y="20" width="4" height="4" fill="#cdcdcd"/><rect x="36" y="0" width="4" height="4" fill="#cdcdcd"/><rect x="36" y="4" width="4" height="4" fill="#fff"/><rect x="36" y="8" width="4" height="4" fill="#cdcdcd"/><rect x="36" y="12" width="4" height="4" fill="#fff"/><rect x="36" y="16" width="4" height="4" fill="#cdcdcd"/><rect x="36" y="20" width="4" height="4" fill="#fff"/><path d="M10 16l6-3 5 2 6-4" fill="none" stroke="#9a9a9a" stroke-width="0.6"/></svg>
<div class="t" style="left:1424.6px;top:452.45px;font-size:13px;line-height:13px;color:#e6e6e6;font-weight:400;">outline</div>
<div style="left:1371px;top:482.8px;width:41px;height:23.0px;background:#2e2e2e;"></div>
<svg style="position:absolute;left:1372px;top:483.8px;" width="39" height="21" viewBox="0 0 39 21"><rect width="39" height="21" fill="#fff"/><path d="M7 21c0-4 1.5-6 3.5-8 .5-4 3.5-9 8-11 3.5-1.5 6.5.5 8 4 1.5 4 1 8 0 11l1 4z" fill="#161616"/><path d="M11 21c1.5-2.5 4-4.5 7.5-4.5h5c2.5.5 3.5 2.5 4 4.5z" fill="#a6a29e"/><path d="M17.5 8.5h5l.5 6-3 1.5-2.5-2z" fill="#d9cbc2"/><rect x="19" y="12.5" width="2.5" height="1" fill="#c03030"/></svg>
<div class="t" style="left:1424.6px;top:487.45px;font-size:13px;line-height:13px;color:#e6e6e6;font-weight:400;">base</div>
<svg style="position:absolute;left:1352px;top:521.35px;" width="8" height="12" viewBox="0 0 8 12"><path d="M1.5 1l4.5 5-4.5 5" fill="none" stroke="#bdbdbd" stroke-width="1.1"/></svg>
<svg style="position:absolute;left:1366px;top:519.85px;" width="19" height="14" viewBox="0 0 19 14"><path d="M0.5 1.5c0-.6.4-1 1-1h5l2 2.2h9c.6 0 1 .4 1 1V13c0 .6-.4 1-1 1h-16c-.6 0-1-.4-1-1z" fill="#d6d6d6"/><path d="M0.5 4.5h18" stroke="#535353" stroke-width="1"/></svg>
<div class="t" style="left:1400.7px;top:521.89px;font-size:12.3px;line-height:12.3px;color:#dedede;font-weight:400;">Group 1</div>
<svg style="position:absolute;left:1352px;top:552.75px;" width="8" height="12" viewBox="0 0 8 12"><path d="M1.5 1l4.5 5-4.5 5" fill="none" stroke="#bdbdbd" stroke-width="1.1"/></svg>
<svg style="position:absolute;left:1366px;top:551.25px;" width="19" height="14" viewBox="0 0 19 14"><path d="M0.5 1.5c0-.6.4-1 1-1h5l2 2.2h9c.6 0 1 .4 1 1V13c0 .6-.4 1-1 1h-16c-.6 0-1-.4-1-1z" fill="#d6d6d6"/><path d="M0.5 4.5h18" stroke="#535353" stroke-width="1"/></svg>
<div class="t" style="left:1400.7px;top:553.29px;font-size:12.3px;line-height:12.3px;color:#dedede;font-weight:400;">Group 1</div>
<div style="left:1309px;top:998px;width:296px;height:1px;background:#444444;"></div>
<div style="left:1309px;top:999px;width:296px;height:31px;background:#535353;"></div>
<svg style="position:absolute;left:1349px;top:1008px;" width="19" height="13" viewBox="0 0 19 13"><rect x="1" y="3" width="9" height="7" rx="3.5" fill="none" stroke="#9a9a9a" stroke-width="1.4"/><rect x="8" y="3" width="9" height="7" rx="3.5" fill="none" stroke="#9a9a9a" stroke-width="1.4"/></svg>
<div class="t" style="left:1385px;top:1006.40px;font-size:16px;line-height:16px;color:#c8c8c8;font-weight:400;font-style:italic;font-family:"Liberation Serif",serif;">fx</div>
<svg style="position:absolute;left:1401px;top:1018px;" width="5" height="4" viewBox="0 0 5 4"><path d="M0 0h5l-2.5 3z" fill="#e0e0e0"/></svg>
<svg style="position:absolute;left:1418px;top:1007px;" width="17" height="14" viewBox="0 0 17 14"><rect x="0.5" y="0.5" width="16" height="13" fill="#d6d6d6"/><circle cx="8.5" cy="7" r="4" fill="#535353"/></svg>
<svg style="position:absolute;left:1453px;top:1006px;" width="19" height="18" viewBox="0 0 19 18"><circle cx="8" cy="8" r="6.5" fill="none" stroke="#d6d6d6" stroke-width="1.4"/><path d="M12.6 3.4l-9.2 9.2a6.5 6.5 0 0 0 9.2-9.2z" fill="#d6d6d6"/><path d="M14 15h5l-2.5 3z" fill="#e0e0e0"/></svg>
<svg style="position:absolute;left:1486px;top:1007px;" width="17" height="14" viewBox="0 0 17 14"><path d="M0.5 1.5c0-.6.4-1 1-1h5l2 2.2h9c.6 0 1 .4 1 1V13c0 .6-.4 1-1 1h-16c-.6 0-1-.4-1-1z" fill="#d6d6d6"/><path d="M0.5 4.5h18" stroke="#535353" stroke-width="1"/></svg>
<svg style="position:absolute;left:1521px;top:1006px;" width="16" height="16" viewBox="0 0 16 16"><rect x="1" y="1" width="14" height="14" fill="none" stroke="#d6d6d6" stroke-width="1.4"/><path d="M8 4.5v7M4.5 8h7" stroke="#d6d6d6" stroke-width="1.5"/></svg>
<svg style="position:absolute;left:1554px;top:1006px;" width="16" height="17" viewBox="0 0 16 17"><path d="M1 3h14M5.5 3V1.5h5V3" fill="none" stroke="#d6d6d6" stroke-width="1.4"/><path d="M2.5 4.5h11l-1 11.5h-9z" fill="none" stroke="#d6d6d6" stroke-width="1.4"/><path d="M6 6.5v8M8 6.5v8M10 6.5v8" stroke="#d6d6d6" stroke-width="1"/></svg>
<div style="left:1605px;top:88px;width:4px;height:942px;background:#3c3c3c;"></div>
<div style="left:1609px;top:88px;width:319px;height:942px;background:#535353;"></div>
<div style="left:1609px;top:88px;width:319px;height:36px;background:#424242;"></div>
<div style="left:1663px;top:89px;width:74px;height:35px;background:#535353;"></div>
<div style="left:1662px;top:89px;width:1px;height:35px;background:#3a3a3a;"></div>
<div style="left:1737px;top:89px;width:1px;height:35px;background:#3a3a3a;"></div>
<div style="left:1815px;top:89px;width:1px;height:35px;background:#3a3a3a;"></div>
<div style="left:1884px;top:89px;width:1px;height:35px;background:#3a3a3a;"></div>
<div class="t" style="left:1620px;top:98.93px;font-size:12.2px;line-height:12.2px;color:#a8a8a8;font-weight:700;">Color</div>
<div class="t" style="left:1673px;top:99.27px;font-size:11.8px;line-height:11.8px;color:#f2f2f2;font-weight:700;">Swatches</div>
<div class="t" style="left:1748px;top:98.93px;font-size:12.2px;line-height:12.2px;color:#a8a8a8;font-weight:700;">Gradients</div>
<div class="t" style="left:1826px;top:98.93px;font-size:12.2px;line-height:12.2px;color:#a8a8a8;font-weight:700;">Patterns</div>
<svg style="position:absolute;left:1912px;top:101px;" width="11" height="9" viewBox="0 0 11 9"><rect x="0" y="1.0" width="11" height="1" fill="#c8c8c8"/><rect x="0" y="3.1" width="11" height="1" fill="#c8c8c8"/><rect x="0" y="5.2" width="11" height="1" fill="#c8c8c8"/><rect x="0" y="7.300000000000001" width="11" height="1" fill="#c8c8c8"/></svg>
<svg style="position:absolute;left:1618px;top:142px;" width="15" height="15" viewBox="0 0 15 15"><circle cx="6" cy="6" r="4.3" fill="none" stroke="#dcdcdc" stroke-width="1.8"/><path d="M9.2 9.2l4 4" stroke="#dcdcdc" stroke-width="2.4" stroke-linecap="round"/></svg>
<div style="left:1636px;top:135px;width:281px;height:27px;box-sizing:border-box;background:#434343;border:1px solid #5a5a5a;border-radius:2px;"></div>
<div class="t" style="left:1642.7px;top:142.43px;font-size:14.2px;line-height:14.2px;color:#8c8c8c;font-weight:400;">Search Swatches</div>
<div style="left:1617px;top:174px;width:302px;height:22px;background:#4e4e4e;"></div>
<div style="left:1618.00px;top:174.6px;width:20.4px;height:20.6px;background:#fff;"></div>
<div style="left:1640.65px;top:174.6px;width:20.4px;height:20.6px;background:#fff;"></div>
<div style="left:1663.30px;top:174.6px;width:20.4px;height:20.6px;background:#000;"></div>
<div style="left:1685.95px;top:174.6px;width:20.4px;height:20.6px;background:#928d89;"></div>
<div style="left:1708.60px;top:174.6px;width:20.4px;height:20.6px;background:#fff;"></div>
<div style="left:1731.25px;top:174.6px;width:20.4px;height:20.6px;background:#fff;"></div>
<div style="left:1753.90px;top:174.6px;width:20.4px;height:20.6px;background:#000;"></div>
<div style="left:1776.55px;top:174.6px;width:20.4px;height:20.6px;background:#009c99;"></div>
<div style="left:1799.20px;top:174.6px;width:20.4px;height:20.6px;background:#000;"></div>
<div style="left:1821.85px;top:174.6px;width:20.4px;height:20.6px;background:#fff;"></div>
<div style="left:1844.50px;top:174.6px;width:20.4px;height:20.6px;background:#000;"></div>
<div style="left:1867.15px;top:174.6px;width:20.4px;height:20.6px;background:#000;"></div>
<div style="left:1889.80px;top:174.6px;width:20.4px;height:20.6px;background:#fff;"></div>
<div style="left:1609px;top:205px;width:297px;height:1px;background:#474747;"></div>
<div style="left:1609px;top:206px;width:297px;height:441px;background:#4f4f4f;"></div>
<div style="left:1609px;top:207px;width:297px;height:35.400000000000006px;background:#424242;"></div>
<svg style="position:absolute;left:1618px;top:221.7px;" width="11" height="7" viewBox="0 0 11 7"><path d="M1 1l4.5 4.5L10 1" fill="none" stroke="#bdbdbd" stroke-width="1.1"/></svg>
<svg style="position:absolute;left:1634.5px;top:217.7px;" width="19" height="14" viewBox="0 0 19 14"><path d="M0.5 1.5c0-.6.4-1 1-1h5l2 2.2h9c.6 0 1 .4 1 1V13c0 .6-.4 1-1 1h-16c-.6 0-1-.4-1-1z" fill="#d6d6d6"/><path d="M0.5 4.5h18" stroke="#444" stroke-width="1"/></svg>
<div class="t" style="left:1665.3px;top:218.42px;font-size:13.5px;line-height:13.5px;color:#e6e6e6;font-weight:400;">RGB</div>
<div style="left:1635.60px;top:244.5px;width:35.2px;height:35.7px;background:#ff0000;"></div>
<div style="left:1673.38px;top:244.5px;width:35.2px;height:35.7px;background:#ffff00;"></div>
<div style="left:1711.16px;top:244.5px;width:35.2px;height:35.7px;background:#00ff00;"></div>
<div style="left:1748.94px;top:244.5px;width:35.2px;height:35.7px;background:#00ffff;"></div>
<div style="left:1786.72px;top:244.5px;width:35.2px;height:35.7px;background:#0000ff;"></div>
<div style="left:1824.50px;top:244.5px;width:35.2px;height:35.7px;background:#ff00ff;"></div>
<div style="left:1609px;top:280.2px;width:297px;height:34.5px;background:#424242;"></div>
<svg style="position:absolute;left:1618px;top:294.45px;" width="11" height="7" viewBox="0 0 11 7"><path d="M1 1l4.5 4.5L10 1" fill="none" stroke="#bdbdbd" stroke-width="1.1"/></svg>
<svg style="position:absolute;left:1634.5px;top:290.45px;" width="19" height="14" viewBox="0 0 19 14"><path d="M0.5 1.5c0-.6.4-1 1-1h5l2 2.2h9c.6 0 1 .4 1 1V13c0 .6-.4 1-1 1h-16c-.6 0-1-.4-1-1z" fill="#d6d6d6"/><path d="M0.5 4.5h18" stroke="#444" stroke-width="1"/></svg>
<div class="t" style="left:1664.7px;top:291.17px;font-size:13.5px;line-height:13.5px;color:#e6e6e6;font-weight:400;">CMYK</div>
<div style="left:1634px;top:317px;width:272px;height:34px;background:#424242;"></div>
<svg style="position:absolute;left:1643px;top:331.0px;" width="11" height="7" viewBox="0 0 11 7"><path d="M1 1l4.5 4.5L10 1" fill="none" stroke="#bdbdbd" stroke-width="1.1"/></svg>
<svg style="position:absolute;left:1660px;top:327.0px;" width="19" height="14" viewBox="0 0 19 14"><path d="M0.5 1.5c0-.6.4-1 1-1h5l2 2.2h9c.6 0 1 .4 1 1V13c0 .6-.4 1-1 1h-16c-.6 0-1-.4-1-1z" fill="#d6d6d6"/><path d="M0.5 4.5h18" stroke="#444" stroke-width="1"/></svg>
<div class="t" style="left:1689.8px;top:327.72px;font-size:13.5px;line-height:13.5px;color:#e6e6e6;font-weight:400;">Grayscale</div>
<div style="left:1660.60px;top:354.70px;width:35.4px;height:35.2px;background:#ffffff;"></div>
<div style="left:1698.35px;top:354.70px;width:35.4px;height:35.2px;background:#ebebeb;"></div>
<div style="left:1736.10px;top:354.70px;width:35.4px;height:35.2px;background:#e0e0e0;"></div>
<div style="left:1773.85px;top:354.70px;width:35.4px;height:35.2px;background:#d6d6d6;"></div>
<div style="left:1811.60px;top:354.70px;width:35.4px;height:35.2px;background:#cccccc;"></div>
<div style="left:1849.35px;top:354.70px;width:35.4px;height:35.2px;background:#c2c2c2;"></div>
<div style="left:1660.60px;top:392.20px;width:35.4px;height:35.2px;background:#b5b5b5;"></div>
<div style="left:1698.35px;top:392.20px;width:35.4px;height:35.2px;background:#a9a9a9;"></div>
<div style="left:1736.10px;top:392.20px;width:35.4px;height:35.2px;background:#9e9e9e;"></div>
<div style="left:1773.85px;top:392.20px;width:35.4px;height:35.2px;background:#949494;"></div>
<div style="left:1811.60px;top:392.20px;width:35.4px;height:35.2px;background:#898989;"></div>
<div style="left:1849.35px;top:392.20px;width:35.4px;height:35.2px;background:#7d7d7d;"></div>
<div style="left:1660.60px;top:429.70px;width:35.4px;height:35.2px;background:#727272;"></div>
<div style="left:1698.35px;top:429.70px;width:35.4px;height:35.2px;background:#636363;"></div>
<div style="left:1736.10px;top:429.70px;width:35.4px;height:35.2px;background:#545454;"></div>
<div style="left:1773.85px;top:429.70px;width:35.4px;height:35.2px;background:#464646;"></div>
<div style="left:1811.60px;top:429.70px;width:35.4px;height:35.2px;background:#353535;"></div>
<div style="left:1849.35px;top:429.70px;width:35.4px;height:35.2px;background:#262626;"></div>
<div style="left:1660.60px;top:467.20px;width:35.4px;height:35.2px;background:#111111;"></div>
<div style="left:1698.35px;top:467.20px;width:35.4px;height:35.2px;background:#000000;"></div>
<div style="left:1736.10px;top:467.20px;width:35.4px;height:35.2px;background:#fff200;"></div>
<div style="left:1773.85px;top:467.20px;width:35.4px;height:35.2px;background:#e05c45;"></div>
<div style="left:1635.40px;top:504.8px;width:35.4px;height:35.1px;background:#ed1c24;"></div>
<div style="left:1673.20px;top:504.8px;width:35.4px;height:35.1px;background:#fff200;"></div>
<div style="left:1711.00px;top:504.8px;width:35.4px;height:35.1px;background:#00a651;"></div>
<div style="left:1748.80px;top:504.8px;width:35.4px;height:35.1px;background:#00aeef;"></div>
<div style="left:1786.60px;top:504.8px;width:35.4px;height:35.1px;background:#2e3192;"></div>
<div style="left:1824.40px;top:504.8px;width:35.4px;height:35.1px;background:#ec008c;"></div>
<div style="left:1609px;top:541px;width:297px;height:36px;background:#424242;"></div>
<svg style="position:absolute;left:1618px;top:556.0px;" width="11" height="7" viewBox="0 0 11 7"><path d="M1 1l4.5 4.5L10 1" fill="none" stroke="#bdbdbd" stroke-width="1.1"/></svg>
<svg style="position:absolute;left:1634.5px;top:552.0px;" width="19" height="14" viewBox="0 0 19 14"><path d="M0.5 1.5c0-.6.4-1 1-1h5l2 2.2h9c.6 0 1 .4 1 1V13c0 .6-.4 1-1 1h-16c-.6 0-1-.4-1-1z" fill="#d6d6d6"/><path d="M0.5 4.5h18" stroke="#444" stroke-width="1"/></svg>
<div class="t" style="left:1664.9px;top:552.73px;font-size:13.5px;line-height:13.5px;color:#e6e6e6;font-weight:400;">Pastel</div>
<div style="left:1635.40px;top:578.2px;width:35.4px;height:34.8px;background:#f69679;"></div>
<div style="left:1673.20px;top:578.2px;width:35.4px;height:34.8px;background:#f9ad81;"></div>
<div style="left:1711.00px;top:578.2px;width:35.4px;height:34.8px;background:#fdc68a;"></div>
<div style="left:1748.80px;top:578.2px;width:35.4px;height:34.8px;background:#fff79a;"></div>
<div style="left:1786.60px;top:578.2px;width:35.4px;height:34.8px;background:#c4df9b;"></div>
<div style="left:1824.40px;top:578.2px;width:35.4px;height:34.8px;background:#a3d39c;"></div>
<div style="left:1862.20px;top:578.2px;width:35.4px;height:34.8px;background:#82ca9d;"></div>
<div style="left:1635.40px;top:616px;width:35.4px;height:30.5px;background:#7accc8;"></div>
<div style="left:1673.20px;top:616px;width:35.4px;height:30.5px;background:#6dcff6;"></div>
<div style="left:1711.00px;top:616px;width:35.4px;height:30.5px;background:#7da7d9;"></div>
<div style="left:1748.80px;top:616px;width:35.4px;height:30.5px;background:#8393ca;"></div>
<div style="left:1786.60px;top:616px;width:35.4px;height:30.5px;background:#8781bd;"></div>
<div style="left:1824.40px;top:616px;width:35.4px;height:30.5px;background:#a186be;"></div>
<div style="left:1862.20px;top:616px;width:35.4px;height:30.5px;background:#bd8cbf;"></div>
<div style="left:1906px;top:206px;width:22px;height:441px;background:#4a4a4a;"></div>
<svg style="position:absolute;left:1914px;top:217px;" width="10" height="7" viewBox="0 0 10 7"><path d="M1 5.5l4-4 4 4" fill="none" stroke="#9a9a9a" stroke-width="1.1"/></svg>
<div style="left:1911px;top:228px;width:13px;height:164px;background:#6b6b6b;border-radius:2px;"></div>
<svg style="position:absolute;left:1914px;top:627px;" width="10" height="7" viewBox="0 0 10 7"><path d="M1 1.5l4 4 4-4" fill="none" stroke="#9a9a9a" stroke-width="1.1"/></svg>
<div style="left:1609px;top:647px;width:319px;height:34px;background:#535353;"></div>
<div style="left:1609px;top:646px;width:319px;height:1px;background:#474747;"></div>
<svg style="position:absolute;left:1804px;top:655px;" width="18" height="15" viewBox="0 0 18 15"><path d="M0.5 1.5c0-.6.4-1 1-1h5l2 2.2h8c.6 0 1 .4 1 1V13c0 .6-.4 1-1 1h-15c-.6 0-1-.4-1-1z" fill="#d6d6d6"/><path d="M0.5 4.5h17" stroke="#535353" stroke-width="1"/></svg>
<svg style="position:absolute;left:1841px;top:655px;" width="16" height="16" viewBox="0 0 16 16"><rect x="1" y="1" width="14" height="14" fill="none" stroke="#d6d6d6" stroke-width="1.4"/><path d="M8 4.5v7M4.5 8h7" stroke="#d6d6d6" stroke-width="1.5"/></svg>
<svg style="position:absolute;left:1878px;top:654px;" width="15" height="17" viewBox="0 0 15 17"><path d="M1 3h13M5 3V1.5h5V3" fill="none" stroke="#8c8c8c" stroke-width="1.3"/><path d="M2.5 4.5h10l-1 11.5h-8z" fill="none" stroke="#8c8c8c" stroke-width="1.3"/><path d="M5.5 6.5v8M7.5 6.5v8M9.5 6.5v8" stroke="#8c8c8c" stroke-width="1"/></svg>
<div style="left:1609px;top:681px;width:319px;height:3px;background:#3c3c3c;"></div>
<div style="left:1609px;top:684px;width:319px;height:34px;background:#424242;"></div>
<div style="left:1609px;top:684px;width:83px;height:34px;background:#535353;"></div>
<div style="left:1692px;top:684px;width:1px;height:34px;background:#3a3a3a;"></div>
<div style="left:1787px;top:684px;width:1px;height:34px;background:#3a3a3a;"></div>
<div style="left:1860px;top:684px;width:1px;height:34px;background:#3a3a3a;"></div>
<div class="t" style="left:1620.2px;top:693.46px;font-size:12.4px;line-height:12.4px;color:#f2f2f2;font-weight:700;">Properties</div>
<div class="t" style="left:1702.8px;top:693.54px;font-size:12.3px;line-height:12.3px;color:#a8a8a8;font-weight:700;">Adjustments</div>
<div class="t" style="left:1799.6px;top:693.88px;font-size:11.9px;line-height:11.9px;color:#a8a8a8;font-weight:700;">Libraries</div>
<svg style="position:absolute;left:1911px;top:695px;" width="11" height="9" viewBox="0 0 11 9"><rect x="0" y="1.0" width="11" height="1" fill="#c8c8c8"/><rect x="0" y="3.1" width="11" height="1" fill="#c8c8c8"/><rect x="0" y="5.2" width="11" height="1" fill="#c8c8c8"/><rect x="0" y="7.300000000000001" width="11" height="1" fill="#c8c8c8"/></svg>
<div style="left:1622px;top:726px;width:28px;height:28px;background:#3d3d3d;border-radius:2px;"></div>
<svg style="position:absolute;left:1627px;top:731px;" width="18" height="18" viewBox="0 0 18 18"><path d="M7 2h5.5l3.5 3.5V14H7z" fill="#d6d6d6"/><rect x="2" y="8" width="7.5" height="7.5" fill="#d6d6d6" stroke="#3d3d3d" stroke-width="1.2"/><path d="M12 2v4h4" fill="none" stroke="#3d3d3d" stroke-width="1"/></svg>
<div class="t" style="left:1657.8px;top:735.79px;font-size:12.6px;line-height:12.6px;color:#dedede;font-weight:400;">Embedded Smart Object</div>
<div style="left:1609px;top:759px;width:319px;height:1px;background:#474747;"></div>
<div style="left:1909px;top:761px;width:19px;height:196px;background:#4a4a4a;"></div>
<svg style="position:absolute;left:1913px;top:771px;" width="10" height="7" viewBox="0 0 10 7"><path d="M1 5.5l4-4 4 4" fill="none" stroke="#9a9a9a" stroke-width="1.1"/></svg>
<div style="left:1911px;top:783px;width:13px;height:70px;background:#6b6b6b;border-radius:2px;"></div>
<svg style="position:absolute;left:1913px;top:942px;" width="10" height="7" viewBox="0 0 10 7"><path d="M1 1.5l4 4 4-4" fill="none" stroke="#9a9a9a" stroke-width="1.1"/></svg>
<div class="t" style="left:1620.6px;top:781.29px;font-size:12.6px;line-height:12.6px;color:#e6e6e6;font-weight:700;">Transform</div>
<svg style="position:absolute;left:1837px;top:777px;" width="20" height="18" viewBox="0 0 20 18"><path d="M5 8.5a6 6 0 1 1 6 6" fill="none" stroke="#e0e0e0" stroke-width="1.8"/><path d="M1.5 8l4-4.5 4 4.5z" fill="#e0e0e0"/><path d="M4 16.5h14" stroke="#e0e0e0" stroke-width="1.5"/></svg>
<div class="t" style="left:1620.6px;top:812.58px;font-size:12.5px;line-height:12.5px;color:#c8c8c8;font-weight:400;">W:</div>
<div class="t" style="left:1647.2px;top:812.32px;font-size:12.8px;line-height:12.8px;color:#dedede;font-weight:400;">3840 px</div>
<div class="t" style="left:1763px;top:812.58px;font-size:12.5px;line-height:12.5px;color:#c8c8c8;font-weight:400;">H:</div>
<div class="t" style="left:1787.2px;top:812.32px;font-size:12.8px;line-height:12.8px;color:#dedede;font-weight:400;">2160 px</div>
<div class="t" style="left:1623px;top:838.88px;font-size:12.5px;line-height:12.5px;color:#c8c8c8;font-weight:400;">X:</div>
<div style="left:1641px;top:834px;width:76px;height:21px;box-sizing:border-box;background:#434343;border:1px solid #5a5a5a;border-radius:2px;"></div>
<div class="t" style="left:1647.2px;top:838.62px;font-size:12.8px;line-height:12.8px;color:#dedede;font-weight:400;">0 px</div>
<div class="t" style="left:1765.6px;top:838.88px;font-size:12.5px;line-height:12.5px;color:#c8c8c8;font-weight:400;">Y:</div>
<div style="left:1784px;top:834px;width:77px;height:21px;box-sizing:border-box;background:#434343;border:1px solid #5a5a5a;border-radius:2px;"></div>
<div class="t" style="left:1790px;top:838.62px;font-size:12.8px;line-height:12.8px;color:#dedede;font-weight:400;">0 px</div>
<svg style="position:absolute;left:1615px;top:869px;" width="18" height="14" viewBox="0 0 18 14"><path d="M1 13h16M1 13L13 2M9 13a8 8 0 0 0-3-5.5" fill="none" stroke="#d0d0d0" stroke-width="1.4"/></svg>
<div style="left:1640px;top:866px;width:67px;height:20px;box-sizing:border-box;background:#434343;border:1px solid #5a5a5a;border-radius:2px;"></div>
<div style="left:1688px;top:867px;width:1px;height:18px;background:#535353;"></div>
<div class="t" style="left:1645.4px;top:870.38px;font-size:12.5px;line-height:12.5px;color:#dedede;font-weight:400;">0.00°</div>
<svg style="position:absolute;left:1693px;top:873px;" width="10" height="7" viewBox="0 0 10 7"><path d="M1 1.5l4 4 4-4" fill="none" stroke="#bdbdbd" stroke-width="1.1"/></svg>
<div class="t" style="left:1620.6px;top:912.71px;font-size:12.7px;line-height:12.7px;color:#d6d6d6;font-weight:400;">mask.png</div>
<div style="left:1609px;top:990px;width:319px;height:3px;background:#3c3c3c;"></div>
<div style="left:1609px;top:993px;width:319px;height:36px;background:#424242;"></div>
<div style="left:1733px;top:993px;width:77px;height:36px;background:#535353;"></div>
<div style="left:1681px;top:993px;width:1px;height:36px;background:#3a3a3a;"></div>
<div style="left:1733px;top:993px;width:1px;height:36px;background:#3a3a3a;"></div>
<div style="left:1810px;top:993px;width:1px;height:36px;background:#3a3a3a;"></div>
<div style="left:1885px;top:993px;width:1px;height:36px;background:#3a3a3a;"></div>
<div class="t" style="left:1620px;top:1003.88px;font-size:11.9px;line-height:11.9px;color:#a8a8a8;font-weight:700;">Channels</div>
<div class="t" style="left:1691.5px;top:1003.80px;font-size:12px;line-height:12px;color:#a8a8a8;font-weight:700;">Paths</div>
<div class="t" style="left:1743px;top:1003.72px;font-size:12.1px;line-height:12.1px;color:#f2f2f2;font-weight:700;">Character</div>
<div class="t" style="left:1821px;top:1003.72px;font-size:12.1px;line-height:12.1px;color:#a8a8a8;font-weight:700;">Paragraph</div>
<svg style="position:absolute;left:1911px;top:1005px;" width="11" height="9" viewBox="0 0 11 9"><rect x="0" y="1.0" width="11" height="1" fill="#c8c8c8"/><rect x="0" y="3.1" width="11" height="1" fill="#c8c8c8"/><rect x="0" y="5.2" width="11" height="1" fill="#c8c8c8"/><rect x="0" y="7.300000000000001" width="11" height="1" fill="#c8c8c8"/></svg>
<div style="left:0px;top:1030px;width:1928px;height:8px;background:#1f3264;"></div>
<div style="left:60px;top:1030px;width:432px;height:8px;background:#4b4a70;"></div>
<div style="left:686px;top:1030px;width:41px;height:8px;background:#7a8052;"></div>
<div style="left:727px;top:1030px;width:9px;height:8px;background:#3b4b74;"></div>
<div style="left:1049px;top:1030px;width:60px;height:8px;background:#4a509e;"></div>
<div style="left:1478px;top:1030px;width:60px;height:8px;background:#a6604c;"></div>
<div style="left:1923px;top:1030px;width:1px;height:8px;background:#c8c8d8;"></div>
</body></html>
